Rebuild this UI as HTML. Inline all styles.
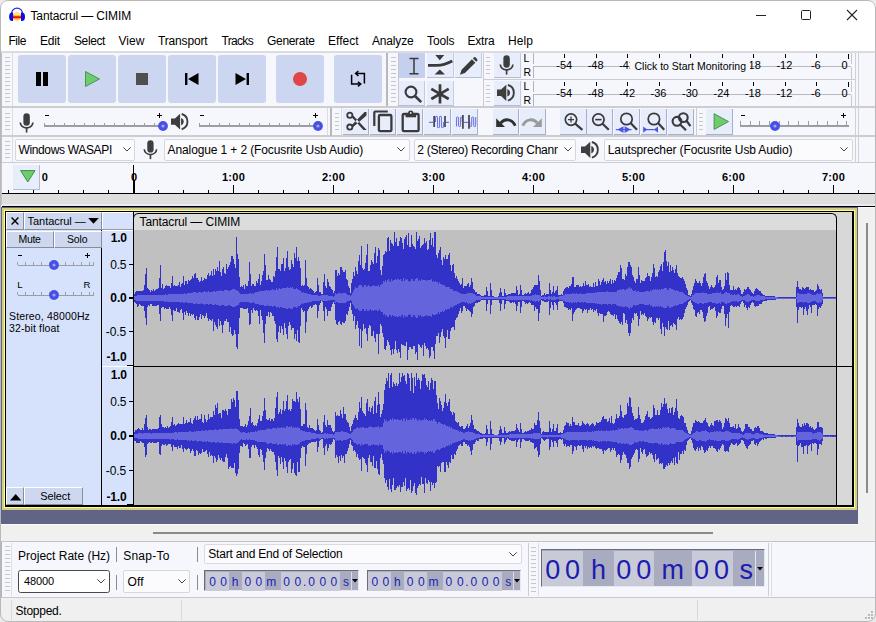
<!DOCTYPE html>
<html><head><meta charset="utf-8"><title>Tantacrul — CIMIM</title>
<style>
*{box-sizing:border-box;margin:0;padding:0}
html,body{width:876px;height:622px;overflow:hidden;background:#f0f0f0}
body{font-family:"Liberation Sans","DejaVu Sans",sans-serif;font-size:12px;color:#000;position:relative}
.a{position:absolute}
.t{position:absolute;white-space:nowrap;line-height:1}
svg{position:absolute;overflow:visible}
</style></head><body>
<div class="a" style="left:0px;top:0px;width:876px;height:52px;background:#fff;"></div>
<svg style="left:0px;top:0px" width="876" height="622" viewBox="0 0 876 622"><ellipse cx="17" cy="16.400" rx="4.200" ry="4.200" fill="#ffc93a"/>
<ellipse cx="17" cy="14.300" rx="3" ry="1.700" fill="#ffe98a"/>
<path d="M12.950 15.400H21.050L21.200 16.300H12.800Z" fill="#ff9410"/>
<path d="M12.800 16.300H21.200V18.300H13.250Z M21.200 18.300H20.750" fill="#f20d0d"/>
<path d="M13.250 18.300H20.750L20.300 19H13.700Z" fill="#ff9a14"/>
<path d="M11.600 14.800V13.550A5.450 5.500 0 0 1 22.500 13.550V14.800" fill="none" stroke="#2424f0" stroke-width="1.300"/>
<path d="M13.100 12.400V20.900H12.200A3.100 4.250 0 0 1 12.200 12.400Z" fill="#0c0ce4"/>
<path d="M21 12.400V20.900H21.900A3.100 4.250 0 0 0 21.900 12.400Z" fill="#0c0ce4"/></svg>
<div class="t" style="left:30.50px;top:10.00px;font-size:12.00px;letter-spacing:-0.128px;">Tantacrul — CIMIM</div>
<div class="a" style="left:756px;top:15px;width:10px;height:1px;background:#222;"></div>
<div class="a" style="left:801px;top:10px;width:10px;height:10px;border:1px solid #222;border-radius:1.5px"></div>
<svg style="left:847px;top:10px" width="10" height="10" viewBox="0 0 10 10"><path d="M0 0L10 10M10 0L0 10" stroke="#222" stroke-width="1.1" fill="none"/></svg>
<div class="t" style="left:8.50px;top:35.00px;font-size:12.00px;letter-spacing:-0.459px;">File</div>
<div class="t" style="left:40.00px;top:35.00px;font-size:12.00px;letter-spacing:-0.169px;">Edit</div>
<div class="t" style="left:74.00px;top:35.00px;font-size:12.00px;letter-spacing:-0.392px;">Select</div>
<div class="t" style="left:118.50px;top:35.00px;font-size:12.00px;letter-spacing:0.052px;">View</div>
<div class="t" style="left:158.00px;top:35.00px;font-size:12.00px;letter-spacing:-0.156px;">Transport</div>
<div class="t" style="left:221.50px;top:35.00px;font-size:12.00px;letter-spacing:-0.676px;">Tracks</div>
<div class="t" style="left:267.00px;top:35.00px;font-size:12.00px;letter-spacing:-0.316px;">Generate</div>
<div class="t" style="left:328.00px;top:35.00px;font-size:12.00px;letter-spacing:0.006px;">Effect</div>
<div class="t" style="left:372.00px;top:35.00px;font-size:12.00px;letter-spacing:-0.170px;">Analyze</div>
<div class="t" style="left:427.00px;top:35.00px;font-size:12.00px;letter-spacing:-0.102px;">Tools</div>
<div class="t" style="left:467.50px;top:35.00px;font-size:12.00px;letter-spacing:-0.201px;">Extra</div>
<div class="t" style="left:508.00px;top:35.00px;font-size:12.00px;letter-spacing:0.080px;">Help</div>
<div class="a" style="left:0px;top:51px;width:876px;height:1px;background:#e6e6e6;"></div>
<div class="a" style="left:0px;top:52px;width:876px;height:112px;background:#f6f7fd;"></div>
<div class="a" style="left:0px;top:106px;width:876px;height:1.6px;background:#cdcdd0;"></div>
<div class="a" style="left:0px;top:135px;width:876px;height:1.5px;background:#cdcdd0;"></div>
<div class="a" style="left:0px;top:161.6px;width:876px;height:1.6px;background:#cdcdd0;"></div>
<div class="a" style="left:1px;top:52px;width:1px;height:112px;background:#bcbcc0;"></div>
<div class="a" style="left:4.5px;top:57px;width:5px;height:46px;background:repeating-linear-gradient(to bottom,#c6c6cc 0 1px,rgba(0,0,0,0) 1px 4px)"></div>
<div class="a" style="left:11.5px;top:53px;width:1px;height:53px;background:#dcdce4;"></div>
<div class="a" style="left:18px;top:55px;width:48px;height:48px;background:#cdd6f0;border-radius:3px"></div>
<div class="a" style="left:68px;top:55px;width:48px;height:48px;background:#cdd6f0;border-radius:3px"></div>
<div class="a" style="left:118px;top:55px;width:48px;height:48px;background:#cdd6f0;border-radius:3px"></div>
<div class="a" style="left:168px;top:55px;width:48px;height:48px;background:#cdd6f0;border-radius:3px"></div>
<div class="a" style="left:218px;top:55px;width:48px;height:48px;background:#cdd6f0;border-radius:3px"></div>
<div class="a" style="left:276px;top:55px;width:48px;height:48px;background:#cdd6f0;border-radius:3px"></div>
<div class="a" style="left:334px;top:55px;width:48px;height:48px;background:#cdd6f0;border-radius:3px"></div>
<div class="a" style="left:35.7px;top:72.4px;width:5px;height:13.6px;background:#000;"></div>
<div class="a" style="left:42.8px;top:72.4px;width:5px;height:13.6px;background:#000;"></div>
<svg style="left:84px;top:70px" width="18" height="18" viewBox="0 0 18 18"><path d="M1.5 1.5L15.5 9L1.5 16.5Z" fill="#6ecb70" stroke="#3f8f43" stroke-width="0.9" stroke-linejoin="round"/></svg>
<div class="a" style="left:136px;top:73px;width:12px;height:12px;background:#4f4f4f;"></div>
<svg style="left:184px;top:72px" width="16" height="14" viewBox="0 0 16 14"><path d="M1 1h2.4v12H1zM14.5 1v12L4 7z" fill="#000"/></svg>
<svg style="left:234px;top:72px" width="16" height="14" viewBox="0 0 16 14"><path d="M12.6 1h2.4v12h-2.4zM1.5 1v12L12 7z" fill="#000"/></svg>
<div class="a" style="left:293px;top:72px;width:14px;height:14px;border-radius:50%;background:#e04646"></div>
<svg style="left:349px;top:70px" width="18" height="18" viewBox="0 0 18 18"><path d="M7.6 3.5H15.4V13.4M2.6 4.8V14.1H10.4" fill="none" stroke="#000" stroke-width="1.5"/><path d="M9.4 1.2L6.6 3.5L9.4 5.8M8.9 11.8L11.7 14.1L8.9 16.4" fill="none" stroke="#000" stroke-width="1.5"/></svg>
<div class="a" style="left:386.3px;top:52.5px;width:1.4px;height:53.5px;background:#b8b8bc;"></div>
<div class="a" style="left:391px;top:57px;width:5px;height:46px;background:repeating-linear-gradient(to bottom,#c6c6cc 0 1px,rgba(0,0,0,0) 1px 4px)"></div>
<div class="a" style="left:397.5px;top:53px;width:1px;height:53px;background:#c4c6d0;"></div>
<div class="a" style="left:399px;top:53px;width:26px;height:25px;background:#c5cfee;"></div>
<div class="a" style="left:427px;top:53px;width:26.5px;height:25px;background:#e8edfb;border-bottom:1px solid #b4bcd8;border-right:1px solid #c4cae0"></div>
<div class="a" style="left:455px;top:53px;width:26.5px;height:25px;background:#e8edfb;border-bottom:1px solid #b4bcd8;border-right:1px solid #c4cae0"></div>
<div class="a" style="left:399px;top:81px;width:26px;height:25px;background:#e8edfb;border-bottom:1px solid #b4bcd8;border-right:1px solid #c4cae0"></div>
<div class="a" style="left:427px;top:81px;width:26.5px;height:25px;background:#e8edfb;border-bottom:1px solid #b4bcd8;border-right:1px solid #c4cae0"></div>
<svg style="left:404.7px;top:56.5px" width="18" height="19" viewBox="0 0 18 19"><path d="M4.500 1.500H13.500M4.500 16.800H13.500M9 1.500V16.800" fill="none" stroke="#3a3a3a" stroke-width="1.500"/></svg>
<svg style="left:427px;top:53px" width="27" height="25" viewBox="0 0 27 25"><path d="M8.300 2.100H17.300L12.800 7.200Z M7.600 21.600H18L12.800 16.600Z" fill="#3a3a3a"/><path d="M1 12.300H10C14 12.300 18 11.600 25.300 7.900" fill="none" stroke="#3a3a3a" stroke-width="2.800"/></svg>
<svg style="left:458.5px;top:56.7px" width="22" height="20" viewBox="0 0 22 20"><g transform="scale(0.93)"><path d="M1 19L2.800 13.600L13.900 2.500L17.500 6.100L6.400 17.200Z M15 1.500L16.100 0.400Q16.900 -0.300 17.700 0.400L19.600 2.300Q20.300 3.100 19.600 3.900L18.500 5Z" fill="#3a3a3a"/></g></svg>
<svg style="left:403px;top:83.8px" width="20" height="20" viewBox="0 0 20 20"><circle cx="8" cy="8" r="5.400" fill="none" stroke="#3a3a3a" stroke-width="2.100"/><path d="M12 12L18.200 18.200" stroke="#3a3a3a" stroke-width="2.600"/></svg>
<svg style="left:429.4px;top:82.6px" width="22" height="22" viewBox="0 0 22 22"><path d="M11 1.200V20.600M2.300 5.800L19.700 16M19.700 5.800L2.300 16" stroke="#3a3a3a" stroke-width="2.700" fill="none"/></svg>
<div class="a" style="left:483px;top:53px;width:1px;height:53px;background:#cdcdd0;"></div>
<div class="a" style="left:0px;top:51px;width:876px;height:1.5px;background:#dcdce0;"></div>
<div class="a" style="left:486px;top:56.7px;width:4px;height:19px;background:repeating-linear-gradient(to bottom,#c6c6cc 0 1px,rgba(0,0,0,0) 1px 4px)"></div>
<div class="a" style="left:493.5px;top:52.5px;width:27px;height:25px;background:#e8edfb;border-bottom:1px solid #b4bcd8;border-right:1px solid #c4cae0"></div>
<div class="t" style="left:523.60px;top:52.75px;font-size:10.50px;">L</div>
<div class="t" style="left:523.60px;top:66.75px;font-size:10.50px;letter-spacing:-0.983px;">R</div>
<div class="a" style="left:532.5px;top:52.5px;width:1px;height:11.5px;background:#b4b4bc;"></div>
<div class="a" style="left:532.5px;top:66.3px;width:318px;height:1px;background:#b9b9c0;"></div>
<div class="a" style="left:532.5px;top:66.3px;width:1px;height:12px;background:#b4b4bc;"></div>
<div class="a" style="left:850.5px;top:52.5px;width:1px;height:11.5px;background:#c8c8d0;"></div>
<div class="a" style="left:850.5px;top:66.5px;width:1px;height:12px;background:#c8c8d0;"></div>
<div class="a" style="left:563.5px;top:54.3px;width:1px;height:3.6px;background:#000;"></div>
<div class="t" style="left:556.25px;top:59.50px;font-size:11.00px;">-54</div>
<div class="a" style="left:595.5px;top:54.3px;width:1px;height:3.6px;background:#000;"></div>
<div class="t" style="left:587.70px;top:59.50px;font-size:11.00px;">-48</div>
<div class="a" style="left:626.5px;top:54.3px;width:1px;height:3.6px;background:#000;"></div>
<div class="t" style="left:619.15px;top:59.50px;font-size:11.00px;">-42</div>
<div class="a" style="left:658.5px;top:54.3px;width:1px;height:3.6px;background:#000;"></div>
<div class="t" style="left:650.60px;top:59.50px;font-size:11.00px;">-36</div>
<div class="a" style="left:689.5px;top:54.3px;width:1px;height:3.6px;background:#000;"></div>
<div class="t" style="left:682.05px;top:59.50px;font-size:11.00px;">-30</div>
<div class="a" style="left:721.5px;top:54.3px;width:1px;height:3.6px;background:#000;"></div>
<div class="t" style="left:713.50px;top:59.50px;font-size:11.00px;">-24</div>
<div class="a" style="left:752.5px;top:54.3px;width:1px;height:3.6px;background:#000;"></div>
<div class="t" style="left:744.95px;top:59.50px;font-size:11.00px;">-18</div>
<div class="a" style="left:784.5px;top:54.3px;width:1px;height:3.6px;background:#000;"></div>
<div class="t" style="left:776.40px;top:59.50px;font-size:11.00px;">-12</div>
<div class="a" style="left:815.5px;top:54.3px;width:1px;height:3.6px;background:#000;"></div>
<div class="t" style="left:810.91px;top:59.50px;font-size:11.00px;">-6</div>
<div class="a" style="left:847.5px;top:54.3px;width:1px;height:5px;background:#000;"></div>
<div class="t" style="left:841.43px;top:59.50px;font-size:11.00px;">0</div>
<div class="a" style="left:486px;top:85.4px;width:4px;height:19px;background:repeating-linear-gradient(to bottom,#c6c6cc 0 1px,rgba(0,0,0,0) 1px 4px)"></div>
<div class="a" style="left:493.5px;top:80.5px;width:27px;height:25px;background:#e8edfb;border-bottom:1px solid #b4bcd8;border-right:1px solid #c4cae0"></div>
<div class="t" style="left:523.60px;top:80.75px;font-size:10.50px;">L</div>
<div class="t" style="left:523.60px;top:94.75px;font-size:10.50px;letter-spacing:-0.983px;">R</div>
<div class="a" style="left:532.5px;top:80.5px;width:1px;height:11.5px;background:#b4b4bc;"></div>
<div class="a" style="left:532.5px;top:94.3px;width:318px;height:1px;background:#b9b9c0;"></div>
<div class="a" style="left:532.5px;top:94.3px;width:1px;height:12px;background:#b4b4bc;"></div>
<div class="a" style="left:850.5px;top:80.5px;width:1px;height:11.5px;background:#c8c8d0;"></div>
<div class="a" style="left:850.5px;top:94.5px;width:1px;height:12px;background:#c8c8d0;"></div>
<div class="a" style="left:563.5px;top:82.3px;width:1px;height:3.6px;background:#000;"></div>
<div class="t" style="left:556.25px;top:87.50px;font-size:11.00px;">-54</div>
<div class="a" style="left:595.5px;top:82.3px;width:1px;height:3.6px;background:#000;"></div>
<div class="t" style="left:587.70px;top:87.50px;font-size:11.00px;">-48</div>
<div class="a" style="left:626.5px;top:82.3px;width:1px;height:3.6px;background:#000;"></div>
<div class="t" style="left:619.15px;top:87.50px;font-size:11.00px;">-42</div>
<div class="a" style="left:658.5px;top:82.3px;width:1px;height:3.6px;background:#000;"></div>
<div class="t" style="left:650.60px;top:87.50px;font-size:11.00px;">-36</div>
<div class="a" style="left:689.5px;top:82.3px;width:1px;height:3.6px;background:#000;"></div>
<div class="t" style="left:682.05px;top:87.50px;font-size:11.00px;">-30</div>
<div class="a" style="left:721.5px;top:82.3px;width:1px;height:3.6px;background:#000;"></div>
<div class="t" style="left:713.50px;top:87.50px;font-size:11.00px;">-24</div>
<div class="a" style="left:752.5px;top:82.3px;width:1px;height:3.6px;background:#000;"></div>
<div class="t" style="left:744.95px;top:87.50px;font-size:11.00px;">-18</div>
<div class="a" style="left:784.5px;top:82.3px;width:1px;height:3.6px;background:#000;"></div>
<div class="t" style="left:776.40px;top:87.50px;font-size:11.00px;">-12</div>
<div class="a" style="left:815.5px;top:82.3px;width:1px;height:3.6px;background:#000;"></div>
<div class="t" style="left:810.91px;top:87.50px;font-size:11.00px;">-6</div>
<div class="a" style="left:847.5px;top:82.3px;width:1px;height:5px;background:#000;"></div>
<div class="t" style="left:841.43px;top:87.50px;font-size:11.00px;">0</div>
<div class="a" style="left:484px;top:78.7px;width:371px;height:1.5px;background:#cbcbd0;"></div>
<svg style="left:499.4px;top:55px" width="15.2" height="19.95" viewBox="0 0 16 21"><rect x="4.600" y="0.300" width="6.800" height="13.200" rx="3.400" fill="#3e3e3e"/><path d="M1.400 9.900A6.600 5.800 0 0 0 14.600 9.900" fill="none" stroke="#3e3e3e" stroke-width="1.750"/><path d="M8 15.500V20.600" stroke="#3e3e3e" stroke-width="1.800"/></svg>
<svg style="left:496.8px;top:83.7px" width="18" height="17.6" viewBox="0 0 18 17.6"><path d="M0 5.600H4L9.300 0.700V16.900L4 12H0Z" fill="#3e3e3e"/><path d="M10.300 5A4 4 0 0 1 10.300 12.600Z" fill="#3e3e3e"/><path d="M10.900 1A8.100 8.100 0 0 1 10.900 16.600" fill="none" stroke="#3e3e3e" stroke-width="1.900"/></svg>
<div class="a" style="left:630px;top:58.5px;width:120px;height:15px;background:#f6f7fd;"></div>
<div class="t" style="left:634.50px;top:60.75px;font-size:10.50px;letter-spacing:0.002px;">Click to Start Monitoring</div>
<div class="a" style="left:855px;top:53px;width:1px;height:54px;background:#cfcfd6;"></div>
<div class="a" style="left:858px;top:53px;width:1px;height:54px;background:#cfcfd6;"></div>
<div class="a" style="left:4.5px;top:113px;width:5px;height:20px;background:repeating-linear-gradient(to bottom,#c6c6cc 0 1px,rgba(0,0,0,0) 1px 4px)"></div>
<div class="a" style="left:11.5px;top:108px;width:1px;height:27px;background:#dcdce4;"></div>
<svg style="left:18.5px;top:112.5px" width="15.2" height="19.95" viewBox="0 0 16 21"><rect x="4.600" y="0.300" width="6.800" height="13.200" rx="3.400" fill="#3e3e3e"/><path d="M1.400 9.900A6.600 5.800 0 0 0 14.600 9.900" fill="none" stroke="#3e3e3e" stroke-width="1.750"/><path d="M8 15.500V20.600" stroke="#3e3e3e" stroke-width="1.800"/></svg>
<div class="a" style="left:44px;top:125.2px;width:117px;height:1.4px;background:#9c9ca4;"></div>
<div class="a" style="left:44px;top:123px;width:1px;height:2.4px;background:#9c9ca4;"></div>
<div class="a" style="left:54px;top:123px;width:1px;height:2.4px;background:#9c9ca4;"></div>
<div class="a" style="left:64px;top:123px;width:1px;height:2.4px;background:#9c9ca4;"></div>
<div class="a" style="left:74px;top:123px;width:1px;height:2.4px;background:#9c9ca4;"></div>
<div class="a" style="left:84px;top:123px;width:1px;height:2.4px;background:#9c9ca4;"></div>
<div class="a" style="left:94px;top:123px;width:1px;height:2.4px;background:#9c9ca4;"></div>
<div class="a" style="left:104px;top:123px;width:1px;height:2.4px;background:#9c9ca4;"></div>
<div class="a" style="left:114px;top:123px;width:1px;height:2.4px;background:#9c9ca4;"></div>
<div class="a" style="left:124px;top:123px;width:1px;height:2.4px;background:#9c9ca4;"></div>
<div class="a" style="left:134px;top:123px;width:1px;height:2.4px;background:#9c9ca4;"></div>
<div class="a" style="left:144px;top:123px;width:1px;height:2.4px;background:#9c9ca4;"></div>
<div class="a" style="left:154px;top:123px;width:1px;height:2.4px;background:#9c9ca4;"></div>
<div class="a" style="left:44.5px;top:115px;width:4.5px;height:1px;background:#000;"></div>
<div class="a" style="left:156.8px;top:115px;width:5px;height:1px;background:#000;"></div>
<div class="a" style="left:158.8px;top:113px;width:1px;height:5px;background:#000;"></div>
<svg style="left:158.1px;top:120.5px" width="10" height="10" viewBox="0 0 10 10"><circle cx="5" cy="5" r="4.900" fill="#484fe8"/><circle cx="5" cy="5" r="1.600" fill="#a2a4dc"/></svg>
<svg style="left:171px;top:112.8px" width="17.64" height="17.248" viewBox="0 0 18 17.6"><path d="M0 5.600H4L9.300 0.700V16.900L4 12H0Z" fill="#3e3e3e"/><path d="M10.300 5A4 4 0 0 1 10.300 12.600Z" fill="#3e3e3e"/><path d="M10.900 1A8.100 8.100 0 0 1 10.900 16.600" fill="none" stroke="#3e3e3e" stroke-width="1.900"/></svg>
<div class="a" style="left:199px;top:125.2px;width:118px;height:1.4px;background:#9c9ca4;"></div>
<div class="a" style="left:199px;top:123px;width:1px;height:2.4px;background:#9c9ca4;"></div>
<div class="a" style="left:209px;top:123px;width:1px;height:2.4px;background:#9c9ca4;"></div>
<div class="a" style="left:219px;top:123px;width:1px;height:2.4px;background:#9c9ca4;"></div>
<div class="a" style="left:229px;top:123px;width:1px;height:2.4px;background:#9c9ca4;"></div>
<div class="a" style="left:239px;top:123px;width:1px;height:2.4px;background:#9c9ca4;"></div>
<div class="a" style="left:249px;top:123px;width:1px;height:2.4px;background:#9c9ca4;"></div>
<div class="a" style="left:259px;top:123px;width:1px;height:2.4px;background:#9c9ca4;"></div>
<div class="a" style="left:269px;top:123px;width:1px;height:2.4px;background:#9c9ca4;"></div>
<div class="a" style="left:279px;top:123px;width:1px;height:2.4px;background:#9c9ca4;"></div>
<div class="a" style="left:289px;top:123px;width:1px;height:2.4px;background:#9c9ca4;"></div>
<div class="a" style="left:299px;top:123px;width:1px;height:2.4px;background:#9c9ca4;"></div>
<div class="a" style="left:309px;top:123px;width:1px;height:2.4px;background:#9c9ca4;"></div>
<div class="a" style="left:199.5px;top:115px;width:4.5px;height:1px;background:#000;"></div>
<div class="a" style="left:312.8px;top:115px;width:5px;height:1px;background:#000;"></div>
<div class="a" style="left:314.8px;top:113px;width:1px;height:5px;background:#000;"></div>
<svg style="left:313px;top:120.5px" width="10" height="10" viewBox="0 0 10 10"><circle cx="5" cy="5" r="4.900" fill="#484fe8"/><circle cx="5" cy="5" r="1.600" fill="#a2a4dc"/></svg>
<div class="a" style="left:327.3px;top:108px;width:1px;height:27px;background:#dcdce0;"></div>
<div class="a" style="left:330.3px;top:107.5px;width:1.4px;height:28px;background:#b8b8bc;"></div>
<div class="a" style="left:335px;top:113px;width:4px;height:20px;background:repeating-linear-gradient(to bottom,#c6c6cc 0 1px,rgba(0,0,0,0) 1px 4px)"></div>
<div class="a" style="left:341.2px;top:108px;width:1px;height:27px;background:#dcdce4;"></div>
<div class="a" style="left:342.8px;top:109px;width:26.2px;height:25.6px;background:#e8edfb;border-bottom:1px solid #a8b0cc;border-right:1px solid #a8aec8"></div>
<div class="a" style="left:370px;top:109px;width:26.2px;height:25.6px;background:#e8edfb;border-bottom:1px solid #a8b0cc;border-right:1px solid #a8aec8"></div>
<div class="a" style="left:397.2px;top:109px;width:26.2px;height:25.6px;background:#e8edfb;border-bottom:1px solid #a8b0cc;border-right:1px solid #a8aec8"></div>
<div class="a" style="left:424.4px;top:109px;width:26.2px;height:25.6px;background:#e8edfb;border-bottom:1px solid #a8b0cc;border-right:1px solid #a8aec8"></div>
<div class="a" style="left:451.6px;top:109px;width:26.2px;height:25.6px;background:#e8edfb;border-bottom:1px solid #a8b0cc;border-right:1px solid #a8aec8"></div>
<div class="a" style="left:492.8px;top:109px;width:26.2px;height:25.6px;background:#e8edfb;border-bottom:1px solid #a8b0cc;border-right:1px solid #a8aec8"></div>
<div class="a" style="left:519.8px;top:109px;width:26.2px;height:25.6px;background:#e8edfb;border-bottom:1px solid #a8b0cc;border-right:1px solid #a8aec8"></div>
<div class="a" style="left:560.4px;top:109px;width:26.2px;height:25.6px;background:#e8edfb;border-bottom:1px solid #a8b0cc;border-right:1px solid #a8aec8"></div>
<div class="a" style="left:587.25px;top:109px;width:26.2px;height:25.6px;background:#e8edfb;border-bottom:1px solid #a8b0cc;border-right:1px solid #a8aec8"></div>
<div class="a" style="left:614.1px;top:109px;width:26.2px;height:25.6px;background:#e8edfb;border-bottom:1px solid #a8b0cc;border-right:1px solid #a8aec8"></div>
<div class="a" style="left:640.95px;top:109px;width:26.2px;height:25.6px;background:#e8edfb;border-bottom:1px solid #a8b0cc;border-right:1px solid #a8aec8"></div>
<div class="a" style="left:667.8px;top:109px;width:26.2px;height:25.6px;background:#e8edfb;border-bottom:1px solid #a8b0cc;border-right:1px solid #a8aec8"></div>
<div class="a" style="left:4.5px;top:141px;width:5px;height:19px;background:repeating-linear-gradient(to bottom,#c6c6cc 0 1px,rgba(0,0,0,0) 1px 4px)"></div>
<div class="a" style="left:11.5px;top:137px;width:1px;height:25px;background:#dcdce4;"></div>
<div class="a" style="left:14.6px;top:138.5px;width:120.6px;height:22px;background:#fbfbfe;border:1px solid #d6d6de;border-radius:2px"></div>
<div class="t" style="left:18.40px;top:144.00px;font-size:12.00px;letter-spacing:-0.339px;">Windows WASAPI</div>
<svg style="left:122.6px;top:147.3px" width="8" height="5" viewBox="0 0 8 5"><path d="M0.4 0.4L4 4L7.6 0.4" fill="none" stroke="#444" stroke-width="1"/></svg>
<svg style="left:143px;top:140.2px" width="14.88" height="19.53" viewBox="0 0 16 21"><rect x="4.600" y="0.300" width="6.800" height="13.200" rx="3.400" fill="#3e3e3e"/><path d="M1.400 9.900A6.600 5.800 0 0 0 14.600 9.900" fill="none" stroke="#3e3e3e" stroke-width="1.750"/><path d="M8 15.500V20.600" stroke="#3e3e3e" stroke-width="1.800"/></svg>
<div class="a" style="left:163.8px;top:138.5px;width:246.2px;height:22px;background:#fbfbfe;border:1px solid #d6d6de;border-radius:2px"></div>
<div class="t" style="left:167.60px;top:144.00px;font-size:12.00px;letter-spacing:-0.119px;">Analogue 1 + 2 (Focusrite Usb Audio)</div>
<svg style="left:397.4px;top:147.3px" width="8" height="5" viewBox="0 0 8 5"><path d="M0.4 0.4L4 4L7.6 0.4" fill="none" stroke="#444" stroke-width="1"/></svg>
<div class="a" style="left:413.8px;top:138.5px;width:162.6px;height:22px;background:#fbfbfe;border:1px solid #d6d6de;border-radius:2px"></div>
<div class="a" style="left:417.3px;top:140px;width:140.6px;height:19px;overflow:hidden">
<div class="t" style="left:0;top:4.04px;font-size:12px;letter-spacing:-0.273px;">2 (Stereo) Recording Channels</div></div>
<svg style="left:563.8px;top:147.3px" width="8" height="5" viewBox="0 0 8 5"><path d="M0.4 0.4L4 4L7.6 0.4" fill="none" stroke="#444" stroke-width="1"/></svg>
<svg style="left:580.8px;top:140.6px" width="18" height="17.6" viewBox="0 0 18 17.6"><path d="M0 5.600H4L9.300 0.700V16.900L4 12H0Z" fill="#3e3e3e"/><path d="M10.300 5A4 4 0 0 1 10.300 12.600Z" fill="#3e3e3e"/><path d="M10.900 1A8.100 8.100 0 0 1 10.900 16.600" fill="none" stroke="#3e3e3e" stroke-width="1.900"/></svg>
<div class="a" style="left:604px;top:138.5px;width:249px;height:22px;background:#fbfbfe;border:1px solid #d6d6de;border-radius:2px"></div>
<div class="t" style="left:607.80px;top:144.00px;font-size:12.00px;letter-spacing:-0.125px;">Lautsprecher (Focusrite Usb Audio)</div>
<svg style="left:840.4px;top:147.3px" width="8" height="5" viewBox="0 0 8 5"><path d="M0.4 0.4L4 4L7.6 0.4" fill="none" stroke="#444" stroke-width="1"/></svg>
<svg style="left:0px;top:0px" width="876" height="622" viewBox="0 0 876 622"><circle cx="349.800" cy="115.300" r="2.600" fill="none" stroke="#3a3a3a" stroke-width="1.800"/><circle cx="349.800" cy="127.100" r="2.600" fill="none" stroke="#3a3a3a" stroke-width="1.800"/><path d="M351.500 125.300L353.200 126.900L366.500 115.400V111.900H364.600Z M351.500 117.100L353.200 115.500L366.700 129.900H363.400Z" fill="#3a3a3a"/></svg>
<svg style="left:0px;top:0px" width="876" height="622" viewBox="0 0 876 622"><path d="M374.300 126.100V112.600Q374.300 111.500 375.400 111.500H387.800" fill="none" stroke="#3a3a3a" stroke-width="2.200"/><rect x="378.900" y="115" width="12.500" height="16.200" rx="1.300" fill="none" stroke="#3a3a3a" stroke-width="2.300"/></svg>
<svg style="left:0px;top:0px" width="876" height="622" viewBox="0 0 876 622"><rect x="402.700" y="114" width="15.900" height="17.200" rx="1.300" fill="none" stroke="#3a3a3a" stroke-width="2.300"/><path d="M405.600 117.300V113.500H416V117.300Z" fill="#3a3a3a"/><path d="M408 113.600A2.700 3.200 0 0 1 413.400 113.600Z" fill="#3a3a3a"/><circle cx="410.700" cy="112.900" r="0.900" fill="#e8edfb"/></svg>
<svg style="left:0px;top:0px" width="876" height="622" viewBox="0 0 876 622"><path d="M429 122.400H433.500M446 122.400H448.900" stroke="#6e76ea" stroke-width="1.200" fill="none"/><path d="M435.50 122.10V118.00C435.50 116.40 435.50 116.40 436.50 116.40C437.50 116.40 437.50 116.40 437.50 118.00V126.20C437.50 127.80 437.50 127.80 438.50 127.80C439.50 127.80 439.50 127.80 439.50 126.20V118.00C439.50 116.40 439.50 116.40 440.50 116.40C441.50 116.40 441.50 116.40 441.50 118.00V126.20C441.50 127.80 441.50 127.80 442.50 127.80C443.50 127.80 443.50 127.80 443.50 126.20V122.10" stroke="#6e76ea" stroke-width="1.100" fill="none"/><path d="M434.150 115.900V126.900M445 115.900V126.900" stroke="#4a4a4a" stroke-width="1.800" fill="none"/></svg>
<svg style="left:0px;top:0px" width="876" height="622" viewBox="0 0 876 622"><path d="M463.800 122.400H468" stroke="#6e76ea" stroke-width="1.200" fill="none"/><path d="M456.50 126.50V118.60C456.50 117.00 456.50 117.00 457.50 117.00C458.50 117.00 458.50 117.00 458.50 118.60V124.90C458.50 126.50 458.50 126.50 459.50 126.50C460.50 126.50 460.50 126.50 460.50 124.90V118.36C460.50 117.00 460.50 117.00 461.35 117.00C462.20 117.00 462.20 117.00 462.20 118.36V121.80" stroke="#6e76ea" stroke-width="1.100" fill="none"/><path d="M469.80 121.80V124.98C469.80 126.50 469.80 126.50 470.75 126.50C471.70 126.50 471.70 126.50 471.70 124.98V118.60C471.70 117.00 471.70 117.00 472.70 117.00C473.70 117.00 473.70 117.00 473.70 118.60V124.90C473.70 126.50 473.70 126.50 474.70 126.50C475.70 126.50 475.70 126.50 475.70 124.90V117.00" stroke="#6e76ea" stroke-width="1.100" fill="none"/><path d="M462.900 114.900V128.700M469 114.900V128.700" stroke="#4a4a4a" stroke-width="1.800" fill="none"/></svg>
<svg style="left:494.6px;top:115px" width="22" height="14" viewBox="0 0 22 14"><g><path d="M1.2 3.200V12H10Z" fill="#303030"/><path d="M5.600 8.200C9.5 3.200 17 3.400 20.200 10.800" fill="none" stroke="#303030" stroke-width="2.8"/></g></svg>
<svg style="left:520.6px;top:115px" width="22" height="14" viewBox="0 0 22 14"><g transform="translate(22,0) scale(-1,1)"><path d="M1.2 3.200V12H10Z" fill="#9a9a9a"/><path d="M5.600 8.200C9.5 3.200 17 3.400 20.200 10.800" fill="none" stroke="#9a9a9a" stroke-width="2.8"/></g></svg>
<svg style="left:0px;top:0px" width="876" height="622" viewBox="0 0 876 622"><circle cx="571" cy="119.6" r="5.7" fill="none" stroke="#3a3a3a" stroke-width="1.7"/><path d="M575.104 123.704L582.4 129.8" stroke="#3a3a3a" stroke-width="2.200"/><path d="M568 119.600H574M571 116.600V122.600" stroke="#3a3a3a" stroke-width="1.3"/></svg>
<svg style="left:0px;top:0px" width="876" height="622" viewBox="0 0 876 622"><circle cx="598.4" cy="119.6" r="5.7" fill="none" stroke="#3a3a3a" stroke-width="1.7"/><path d="M602.504 123.704L608.8 129.8" stroke="#3a3a3a" stroke-width="2.200"/><path d="M595.2 119.600H601.600" stroke="#3a3a3a" stroke-width="1.6"/></svg>
<svg style="left:0px;top:0px" width="876" height="622" viewBox="0 0 876 622"><circle cx="626.5" cy="119" r="5.7" fill="none" stroke="#3a3a3a" stroke-width="1.7"/><path d="M630.604 123.104L637 129.8" stroke="#3a3a3a" stroke-width="2.200"/><path d="M615.800 129.600H631.600" stroke="#4d55e4" stroke-width="1.100"/><path d="M617.300 129.600L623.500 126.200V133ZM630.800 129.600L624.600 126.200V133Z" fill="#4d55e4"/></svg>
<svg style="left:0px;top:0px" width="876" height="622" viewBox="0 0 876 622"><circle cx="653.9" cy="119" r="5.7" fill="none" stroke="#3a3a3a" stroke-width="1.7"/><path d="M658.004 123.104L664.2 129.8" stroke="#3a3a3a" stroke-width="2.200"/><path d="M643.500 129.600H657.500" stroke="#4d55e4" stroke-width="1.2"/><path d="M643.200 126.400L647.200 129.600L643.200 132.800ZM658 126.400L654 129.600L658 132.800Z" fill="#4d55e4"/></svg>
<svg style="left:0px;top:0px" width="876" height="622" viewBox="0 0 876 622"><circle cx="677" cy="121.3" r="4.4" fill="none" stroke="#3a3a3a" stroke-width="2.1"/><path d="M680.168 124.468L686 130.2" stroke="#3a3a3a" stroke-width="2.200"/></svg>
<svg style="left:0px;top:0px" width="876" height="622" viewBox="0 0 876 622"><circle cx="683.3" cy="117.6" r="4.4" fill="none" stroke="#3a3a3a" stroke-width="2.1"/><path d="M686.468 120.768L690.4 126.2" stroke="#3a3a3a" stroke-width="2.200"/></svg>
<div class="a" style="left:695.5px;top:108px;width:1px;height:27px;background:#cdcdd0;"></div>
<div class="a" style="left:699px;top:113px;width:4px;height:20px;background:repeating-linear-gradient(to bottom,#c6c6cc 0 1px,rgba(0,0,0,0) 1px 4px)"></div>
<div class="a" style="left:706.400px;top:109px;width:27px;height:25.6px;background:#e8edfb;border-bottom:1px solid #a8b0cc;border-right:1px solid #a8aec8"></div>
<svg style="left:712.5px;top:112.5px" width="18" height="18" viewBox="0 0 18 18"><path d="M1.100 0.700L15.500 8.600L1.100 16.500Z" fill="#6ecb70" stroke="#3f8f43" stroke-width="0.9" stroke-linejoin="round"/></svg>
<div class="a" style="left:740px;top:125.2px;width:109px;height:1.4px;background:#9c9ca4;"></div>
<div class="a" style="left:740px;top:121.4px;width:1px;height:4px;background:#9c9ca4;"></div>
<div class="a" style="left:750px;top:121.4px;width:1px;height:4px;background:#9c9ca4;"></div>
<div class="a" style="left:759px;top:121.4px;width:1px;height:4px;background:#9c9ca4;"></div>
<div class="a" style="left:769px;top:121.4px;width:1px;height:4px;background:#9c9ca4;"></div>
<div class="a" style="left:779px;top:121.4px;width:1px;height:4px;background:#9c9ca4;"></div>
<div class="a" style="left:788px;top:121.4px;width:1px;height:4px;background:#9c9ca4;"></div>
<div class="a" style="left:798px;top:121.4px;width:1px;height:4px;background:#9c9ca4;"></div>
<div class="a" style="left:808px;top:121.4px;width:1px;height:4px;background:#9c9ca4;"></div>
<div class="a" style="left:817px;top:121.4px;width:1px;height:4px;background:#9c9ca4;"></div>
<div class="a" style="left:827px;top:121.4px;width:1px;height:4px;background:#9c9ca4;"></div>
<div class="a" style="left:837px;top:121.4px;width:1px;height:4px;background:#9c9ca4;"></div>
<div class="a" style="left:846px;top:121.4px;width:1px;height:4px;background:#9c9ca4;"></div>
<div class="a" style="left:740.5px;top:115px;width:4.5px;height:1px;background:#000;"></div>
<div class="a" style="left:841.2px;top:115px;width:5px;height:1px;background:#000;"></div>
<div class="a" style="left:843.2px;top:113px;width:1px;height:5px;background:#000;"></div>
<svg style="left:770px;top:120.5px" width="10" height="10" viewBox="0 0 10 10"><circle cx="5" cy="5" r="4.900" fill="#484fe8"/><circle cx="5" cy="5" r="1.600" fill="#a2a4dc"/></svg>
<div class="a" style="left:855px;top:108px;width:1px;height:55px;background:#cfcfd6;"></div>
<div class="a" style="left:858px;top:108px;width:1px;height:55px;background:#cfcfd6;"></div>
<div class="a" style="left:2px;top:163.2px;width:874px;height:30px;background:#f6f7fd;"></div>
<div class="a" style="left:12.8px;top:164.6px;width:27px;height:25.4px;background:#e8edfb;border-right:1px solid #b4bad0;border-bottom:1px solid #b4bad0"></div>
<svg style="left:19px;top:169px" width="18" height="15" viewBox="0 0 18 15"><path d="M1.6 1.600H16L8.800 13Z" fill="#6ecb70" stroke="#3f8f43" stroke-width="1" stroke-linejoin="round"/></svg>
<div class="t" style="left:41.80px;top:171.50px;font-size:11.00px;font-weight:bold;letter-spacing:-0.317px;">0</div>
<div class="a" style="left:8px;top:189.8px;width:1px;height:3.4px;background:#000;"></div>
<div class="a" style="left:33px;top:189.8px;width:1px;height:3.4px;background:#000;"></div>
<div class="a" style="left:58px;top:189.8px;width:1px;height:3.4px;background:#000;"></div>
<div class="a" style="left:83px;top:189.8px;width:1px;height:3.4px;background:#000;"></div>
<div class="a" style="left:108px;top:189.8px;width:1px;height:3.4px;background:#000;"></div>
<div class="a" style="left:158px;top:189.8px;width:1px;height:3.4px;background:#000;"></div>
<div class="a" style="left:183px;top:189.8px;width:1px;height:3.4px;background:#000;"></div>
<div class="a" style="left:208px;top:189.8px;width:1px;height:3.4px;background:#000;"></div>
<div class="a" style="left:258px;top:189.8px;width:1px;height:3.4px;background:#000;"></div>
<div class="a" style="left:283px;top:189.8px;width:1px;height:3.4px;background:#000;"></div>
<div class="a" style="left:308px;top:189.8px;width:1px;height:3.4px;background:#000;"></div>
<div class="a" style="left:358px;top:189.8px;width:1px;height:3.4px;background:#000;"></div>
<div class="a" style="left:383px;top:189.8px;width:1px;height:3.4px;background:#000;"></div>
<div class="a" style="left:408px;top:189.8px;width:1px;height:3.4px;background:#000;"></div>
<div class="a" style="left:458px;top:189.8px;width:1px;height:3.4px;background:#000;"></div>
<div class="a" style="left:483px;top:189.8px;width:1px;height:3.4px;background:#000;"></div>
<div class="a" style="left:508px;top:189.8px;width:1px;height:3.4px;background:#000;"></div>
<div class="a" style="left:558px;top:189.8px;width:1px;height:3.4px;background:#000;"></div>
<div class="a" style="left:583px;top:189.8px;width:1px;height:3.4px;background:#000;"></div>
<div class="a" style="left:608px;top:189.8px;width:1px;height:3.4px;background:#000;"></div>
<div class="a" style="left:658px;top:189.8px;width:1px;height:3.4px;background:#000;"></div>
<div class="a" style="left:683px;top:189.8px;width:1px;height:3.4px;background:#000;"></div>
<div class="a" style="left:708px;top:189.8px;width:1px;height:3.4px;background:#000;"></div>
<div class="a" style="left:758px;top:189.8px;width:1px;height:3.4px;background:#000;"></div>
<div class="a" style="left:783px;top:189.8px;width:1px;height:3.4px;background:#000;"></div>
<div class="a" style="left:808px;top:189.8px;width:1px;height:3.4px;background:#000;"></div>
<div class="a" style="left:858px;top:189.8px;width:1px;height:3.4px;background:#000;"></div>
<div class="a" style="left:133px;top:164.6px;width:1px;height:28.4px;background:#000;"></div>
<div class="a" style="left:133px;top:180px;width:2px;height:13px;background:#000;"></div>
<div class="t" style="left:131.00px;top:171.50px;font-size:11.00px;font-weight:bold;letter-spacing:-0.317px;">0</div>
<div class="a" style="left:233px;top:185.2px;width:1px;height:8px;background:#000;"></div>
<div class="t" style="left:221.90px;top:171.50px;font-size:11.00px;font-weight:bold;letter-spacing:0.297px;">1:00</div>
<div class="a" style="left:333px;top:185.2px;width:1px;height:8px;background:#000;"></div>
<div class="t" style="left:321.90px;top:171.50px;font-size:11.00px;font-weight:bold;letter-spacing:0.297px;">2:00</div>
<div class="a" style="left:433px;top:185.2px;width:1px;height:8px;background:#000;"></div>
<div class="t" style="left:421.90px;top:171.50px;font-size:11.00px;font-weight:bold;letter-spacing:0.297px;">3:00</div>
<div class="a" style="left:533px;top:185.2px;width:1px;height:8px;background:#000;"></div>
<div class="t" style="left:521.90px;top:171.50px;font-size:11.00px;font-weight:bold;letter-spacing:0.297px;">4:00</div>
<div class="a" style="left:633px;top:185.2px;width:1px;height:8px;background:#000;"></div>
<div class="t" style="left:621.90px;top:171.50px;font-size:11.00px;font-weight:bold;letter-spacing:0.297px;">5:00</div>
<div class="a" style="left:733px;top:185.2px;width:1px;height:8px;background:#000;"></div>
<div class="t" style="left:721.90px;top:171.50px;font-size:11.00px;font-weight:bold;letter-spacing:0.297px;">6:00</div>
<div class="a" style="left:833px;top:185.2px;width:1px;height:8px;background:#000;"></div>
<div class="t" style="left:821.90px;top:171.50px;font-size:11.00px;font-weight:bold;letter-spacing:0.297px;">7:00</div>
<div class="a" style="left:2px;top:192.6px;width:874px;height:1.5px;background:#000;"></div>
<div class="a" style="left:2px;top:194px;width:874px;height:11px;background:#dedede;"></div>
<div class="a" style="left:0px;top:163.2px;width:2px;height:42px;background:#c4c4c8;"></div>
<div class="a" style="left:1px;top:207px;width:857px;height:317px;background:#606585;"></div>
<div class="a" style="left:858px;top:207px;width:17px;height:317px;background:#f0f0f0;"></div>
<div class="a" style="left:858px;top:207px;width:17px;height:1px;background:#fbfbfb;"></div>
<div class="a" style="left:2px;top:205.6px;width:873px;height:1.5px;background:#000;"></div>
<div class="a" style="left:2px;top:204px;width:873px;height:2px;background:#ececec;"></div>
<div class="a" style="left:2px;top:208px;width:855px;height:302px;background:#d3cf86;"></div>
<div class="a" style="left:4px;top:210px;width:851px;height:298px;background:#ffff80;"></div>
<div class="a" style="left:5px;top:211px;width:849px;height:295.6px;background:#000;"></div>
<div class="a" style="left:6px;top:212px;width:95px;height:293px;background:#d6e2fb;"></div>
<div class="a" style="left:101px;top:248px;width:1px;height:257px;background:#000;"></div>
<div class="a" style="left:102px;top:212px;width:31px;height:293px;background:#d6e2fb;"></div>
<div class="a" style="left:133px;top:212px;width:1.3px;height:293px;background:#000;"></div>
<div class="a" style="left:134px;top:212px;width:718px;height:293px;background:#d8d8d8;"></div>
<div class="a" style="left:134px;top:230px;width:702.5px;height:275px;background:#c0c0c0;"></div>
<div class="a" style="left:133px;top:212.5px;width:704px;height:20px;background:#dcdcdc;border:1.2px solid #000;border-left-width:1px;border-bottom:none;border-radius:5.5px 5.5px 0 0"></div>
<div class="a" style="left:134px;top:230px;width:702px;height:3px;background:#c0c0c0;"></div>
<div class="a" style="left:836px;top:230px;width:1.1px;height:275px;background:#000;"></div>
<div class="t" style="left:139.60px;top:216.00px;font-size:12.00px;letter-spacing:-0.128px;">Tantacrul — CIMIM</div>
<div class="a" style="left:134px;top:366px;width:718px;height:1px;background:#000;"></div>
<div class="a" style="left:102px;top:366px;width:31px;height:1.2px;background:#fff;"></div>
<div class="a" style="left:102px;top:229px;width:31px;height:1px;background:#9a9aa2;"></div>
<div class="a" style="left:102px;top:230px;width:31px;height:1px;background:#fff;"></div>
<div class="a" style="left:102px;top:212px;width:31px;height:1px;background:#fff;"></div>
<div class="a" style="left:102px;top:212px;width:1px;height:17px;background:#fff;"></div>
<div class="a" style="left:127px;top:365px;width:6px;height:1px;background:#000;"></div>
<div class="a" style="left:127px;top:504px;width:6px;height:1px;background:#000;"></div>
<div class="a" style="left:6px;top:212px;width:18px;height:18px;background:#cdd8f0;border-top:1px solid #fff;border-left:1px solid #fff;border-right:1px solid #8c8c94;border-bottom:1px solid #8c8c94"></div>
<div class="a" style="left:24px;top:212px;width:78px;height:18px;background:#cdd8f0;border-top:1px solid #fff;border-left:1px solid #fff;border-right:1px solid #8c8c94;border-bottom:1px solid #8c8c94"></div>
<svg style="left:11px;top:217px" width="8" height="8" viewBox="0 0 8 8"><path d="M0.600 0.600L7.400 7.400M7.400 0.600L0.600 7.400" stroke="#000" stroke-width="1.4"/></svg>
<div class="t" style="left:27.60px;top:215.50px;font-size:11.00px;letter-spacing:-0.062px;">Tantacrul —</div>
<svg style="left:88px;top:218.4px" width="11" height="6" viewBox="0 0 11 6"><path d="M0.200 0H10.800L5.500 5.800Z" fill="#000"/></svg>
<div class="a" style="left:6px;top:230.5px;width:48px;height:17.5px;background:#cdd8f0;border-top:1px solid #fff;border-left:1px solid #fff;border-right:1px solid #8c8c94;border-bottom:1px solid #8c8c94"></div>
<div class="a" style="left:54px;top:230.5px;width:48px;height:17.5px;background:#cdd8f0;border-top:1px solid #fff;border-left:1px solid #fff;border-right:1px solid #8c8c94;border-bottom:1px solid #8c8c94"></div>
<div class="t" style="left:18.60px;top:233.75px;font-size:10.50px;letter-spacing:-0.335px;">Mute</div>
<div class="t" style="left:67.00px;top:233.75px;font-size:10.50px;letter-spacing:-0.154px;">Solo</div>
<div class="a" style="left:17.5px;top:264.7px;width:76px;height:1.5px;background:#9c9ca4;"></div>
<div class="a" style="left:17px;top:262px;width:1px;height:3px;background:#a0a0a8;"></div>
<div class="a" style="left:25px;top:262px;width:1px;height:3px;background:#a0a0a8;"></div>
<div class="a" style="left:33px;top:262px;width:1px;height:3px;background:#a0a0a8;"></div>
<div class="a" style="left:41px;top:262px;width:1px;height:3px;background:#a0a0a8;"></div>
<div class="a" style="left:49px;top:262px;width:1px;height:3px;background:#a0a0a8;"></div>
<div class="a" style="left:57px;top:262px;width:1px;height:3px;background:#a0a0a8;"></div>
<div class="a" style="left:65px;top:262px;width:1px;height:3px;background:#a0a0a8;"></div>
<div class="a" style="left:73px;top:262px;width:1px;height:3px;background:#a0a0a8;"></div>
<div class="a" style="left:81px;top:262px;width:1px;height:3px;background:#a0a0a8;"></div>
<div class="a" style="left:89px;top:262px;width:1px;height:3px;background:#a0a0a8;"></div>
<div class="a" style="left:92.5px;top:262px;width:1px;height:3px;background:#a0a0a8;"></div>
<svg style="left:48.7px;top:260.2px" width="10" height="10" viewBox="0 0 10 10"><circle cx="5" cy="5" r="4.900" fill="#484fe8"/><circle cx="5" cy="5" r="1.600" fill="#a2a4dc"/></svg>
<div class="a" style="left:17.5px;top:255.2px;width:4.4px;height:1px;background:#000;"></div>
<div class="a" style="left:85.2px;top:255.2px;width:5px;height:1px;background:#000;"></div>
<div class="a" style="left:87.2px;top:253.2px;width:1px;height:5px;background:#000;"></div>
<div class="a" style="left:17.5px;top:294.9px;width:76px;height:1.5px;background:#9c9ca4;"></div>
<div class="a" style="left:17px;top:292.2px;width:1px;height:3px;background:#a0a0a8;"></div>
<div class="a" style="left:25px;top:292.2px;width:1px;height:3px;background:#a0a0a8;"></div>
<div class="a" style="left:33px;top:292.2px;width:1px;height:3px;background:#a0a0a8;"></div>
<div class="a" style="left:41px;top:292.2px;width:1px;height:3px;background:#a0a0a8;"></div>
<div class="a" style="left:49px;top:292.2px;width:1px;height:3px;background:#a0a0a8;"></div>
<div class="a" style="left:57px;top:292.2px;width:1px;height:3px;background:#a0a0a8;"></div>
<div class="a" style="left:65px;top:292.2px;width:1px;height:3px;background:#a0a0a8;"></div>
<div class="a" style="left:73px;top:292.2px;width:1px;height:3px;background:#a0a0a8;"></div>
<div class="a" style="left:81px;top:292.2px;width:1px;height:3px;background:#a0a0a8;"></div>
<div class="a" style="left:89px;top:292.2px;width:1px;height:3px;background:#a0a0a8;"></div>
<div class="a" style="left:92.5px;top:292.2px;width:1px;height:3px;background:#a0a0a8;"></div>
<svg style="left:48.7px;top:290.4px" width="10" height="10" viewBox="0 0 10 10"><circle cx="5" cy="5" r="4.900" fill="#484fe8"/><circle cx="5" cy="5" r="1.600" fill="#a2a4dc"/></svg>
<div class="t" style="left:17.30px;top:279.75px;font-size:9.50px;">L</div>
<div class="t" style="left:83.60px;top:279.75px;font-size:9.50px;">R</div>
<div class="t" style="left:9.00px;top:310.75px;font-size:10.50px;letter-spacing:0.147px;">Stereo, 48000Hz</div>
<div class="t" style="left:9.00px;top:322.75px;font-size:10.50px;letter-spacing:0.131px;">32-bit float</div>
<div class="a" style="left:6px;top:487px;width:18px;height:18px;background:#cdd8f0;border-top:1px solid #fff;border-left:1px solid #fff;border-right:1px solid #8c8c94;border-bottom:1px solid #8c8c94"></div>
<div class="a" style="left:24px;top:487px;width:59px;height:18px;background:#cdd8f0;border-top:1px solid #fff;border-left:1px solid #fff;border-right:1px solid #8c8c94;border-bottom:1px solid #8c8c94"></div>
<svg style="left:10px;top:494px" width="12" height="7" viewBox="0 0 12 7"><path d="M0 6.500L5.700 0L11.400 6.500Z" fill="#000"/></svg>
<div class="t" style="left:40.20px;top:490.50px;font-size:11.00px;letter-spacing:-0.095px;">Select</div>
<div class="t" style="left:110.80px;top:232.00px;font-size:12.00px;font-weight:bold;letter-spacing:-0.227px;">1.0</div>
<div class="t" style="left:110.30px;top:259.00px;font-size:12.00px;letter-spacing:-0.293px;">0.5</div>
<div class="a" style="left:129.4px;top:264.2px;width:3.6px;height:1px;background:#000;"></div>
<div class="t" style="left:110.30px;top:292.00px;font-size:12.00px;font-weight:bold;letter-spacing:-0.093px;">0.0</div>
<div class="a" style="left:128.5px;top:297.2px;width:4.5px;height:2px;background:#000;"></div>
<div class="t" style="left:105.80px;top:326.00px;font-size:12.00px;letter-spacing:-0.119px;">-0.5</div>
<div class="a" style="left:129.4px;top:331.2px;width:3.6px;height:1px;background:#000;"></div>
<div class="t" style="left:106.40px;top:351.00px;font-size:12.00px;font-weight:bold;letter-spacing:-0.119px;">-1.0</div>
<div class="t" style="left:110.80px;top:369.00px;font-size:12.00px;font-weight:bold;letter-spacing:-0.227px;">1.0</div>
<div class="t" style="left:110.30px;top:396.00px;font-size:12.00px;letter-spacing:-0.293px;">0.5</div>
<div class="a" style="left:129.4px;top:401.2px;width:3.6px;height:1px;background:#000;"></div>
<div class="t" style="left:110.30px;top:430.00px;font-size:12.00px;font-weight:bold;letter-spacing:-0.093px;">0.0</div>
<div class="a" style="left:128.5px;top:435.2px;width:4.5px;height:2px;background:#000;"></div>
<div class="t" style="left:105.80px;top:465.00px;font-size:12.00px;letter-spacing:-0.119px;">-0.5</div>
<div class="a" style="left:129.4px;top:470.2px;width:3.6px;height:1px;background:#000;"></div>
<div class="t" style="left:106.40px;top:491.00px;font-size:12.00px;font-weight:bold;letter-spacing:-0.119px;">-1.0</div>
<svg style="left:0px;top:0px" width="876" height="622" viewBox="0 0 876 622"><path d="M134 294.0V294.0h1V292.3h1V290.8h1V291.0h1V290.5h1V290.7h1V290.5h1V291.3h1V290.9h1V290.4h1V285.4h1V273.8h1V268.0h1V288.4h1V289.0h1V289.9h1V291.5h1V289.8h1V291.3h1V289.1h1V290.7h1V290.1h1V289.1h1V289.0h1V288.1h1V278.3h1V265.0h1V288.0h1V283.6h1V289.0h1V288.3h1V285.5h1V284.7h1V286.4h1V286.3h1V286.3h1V287.9h1V283.4h1V276.4h1V286.3h1V284.9h1V286.3h1V285.9h1V285.9h1V284.9h1V282.4h1V286.5h1V283.9h1V283.0h1V276.4h1V285.0h1V281.2h1V281.4h1V284.3h1V279.7h1V280.7h1V279.6h1V278.8h1V275.5h1V278.2h1V273.6h1V273.0h1V278.4h1V278.4h1V280.0h1V281.9h1V280.6h1V277.1h1V281.2h1V280.3h1V277.5h1V279.1h1V279.1h1V275.3h1V273.0h1V275.5h1V274.5h1V270.9h1V275.7h1V269.0h1V275.2h1V268.9h1V271.0h1V267.3h1V271.1h1V260.7h1V272.3h1V275.8h1V268.5h1V267.0h1V272.7h1V273.8h1V263.8h1V268.6h1V266.8h1V264.7h1V261.7h1V256.3h1V255.6h1V259.4h1V264.4h1V268.2h1V236.5h1V253.9h1V258.6h1V277.3h1V287.4h1V286.3h1V286.9h1V285.0h1V288.8h1V284.1h1V286.0h1V286.4h1V280.5h1V262.4h1V273.9h1V286.1h1V283.8h1V283.9h1V286.3h1V285.7h1V280.5h1V283.4h1V279.3h1V274.0h1V284.9h1V281.4h1V275.3h1V270.5h1V254.0h1V264.9h1V280.4h1V280.2h1V274.5h1V279.2h1V279.8h1V281.6h1V281.6h1V275.6h1V277.2h1V270.5h1V257.1h1V247.0h1V268.8h1V268.7h1V271.4h1V263.6h1V264.4h1V258.0h1V270.7h1V268.0h1V258.0h1V251.0h1V267.0h1V270.1h1V269.4h1V260.2h1V264.0h1V266.9h1V252.6h1V257.7h1V247.0h1V260.9h1V256.6h1V261.2h1V268.1h1V286.2h1V285.0h1V285.5h1V285.1h1V260.0h1V277.6h1V285.9h1V287.2h1V289.3h1V287.5h1V288.5h1V290.2h1V291.3h1V292.7h1V291.8h1V291.2h1V278.0h1V284.5h1V292.1h1V291.5h1V294.3h1V293.5h1V281.9h1V274.0h1V285.7h1V287.5h1V279.0h1V282.1h1V285.5h1V287.2h1V289.3h1V290.0h1V293.2h1V291.3h1V269.7h1V270.0h1V275.6h1V272.5h1V275.0h1V266.7h1V267.0h1V270.0h1V271.8h1V271.5h1V270.2h1V279.3h1V280.3h1V285.7h1V287.5h1V292.5h1V283.2h1V279.3h1V272.3h1V276.3h1V267.1h1V271.1h1V274.2h1V260.5h1V255.2h1V265.2h1V246.0h1V268.4h1V270.4h1V269.3h1V262.6h1V254.7h1V244.4h1V270.7h1V271.2h1V264.8h1V260.4h1V261.5h1V263.6h1V252.8h1V247.3h1V263.0h1V255.8h1V248.3h1V250.4h1V269.8h1V274.7h1V265.7h1V255.3h1V254.1h1V250.6h1V251.6h1V237.5h1V236.5h1V250.6h1V240.0h1V242.7h1V243.9h1V245.8h1V231.5h1V241.5h1V237.5h1V246.3h1V245.6h1V240.8h1V236.5h1V237.6h1V242.5h1V248.5h1V238.9h1V236.9h1V235.1h1V244.9h1V233.3h1V247.3h1V246.8h1V235.4h1V244.1h1V246.3h1V247.2h1V248.9h1V231.5h1V241.0h1V238.6h1V236.4h1V248.1h1V245.5h1V245.1h1V244.0h1V238.1h1V242.5h1V240.9h1V249.7h1V248.7h1V239.6h1V232.9h1V245.3h1V237.7h1V247.4h1V231.5h1V231.5h1V254.9h1V257.8h1V253.3h1V250.0h1V246.9h1V259.7h1V264.6h1V256.6h1V259.1h1V254.5h1V259.4h1V258.8h1V255.4h1V252.8h1V265.2h1V271.3h1V264.6h1V263.6h1V272.7h1V277.6h1V276.4h1V278.7h1V280.7h1V282.6h1V285.2h1V283.7h1V278.1h1V287.7h1V286.3h1V285.5h1V285.5h1V284.1h1V283.4h1V286.6h1V284.6h1V278.0h1V281.8h1V288.9h1V290.4h1V292.4h1V292.2h1V293.6h1V293.8h1V294.0h1V295.1h1V295.5h1V295.6h1V295.6h1V295.3h1V295.3h1V287.0h1V290.8h1V295.6h1V295.5h1V283.0h1V289.8h1V296.1h1V296.3h1V296.5h1V296.5h1V296.5h1V296.5h1V296.2h1V292.8h1V288.0h1V291.8h1V295.6h1V295.7h1V289.0h1V293.3h1V294.6h1V295.1h1V294.4h1V293.5h1V293.8h1V293.3h1V293.2h1V292.9h1V292.8h1V292.6h1V286.0h1V289.8h1V294.6h1V294.3h1V285.0h1V290.1h1V295.1h1V295.1h1V294.3h1V293.0h1V294.0h1V293.3h1V292.4h1V293.9h1V292.6h1V290.1h1V289.2h1V286.8h1V285.0h1V285.0h1V284.8h1V285.3h1V275.0h1V281.3h1V289.5h1V295.9h1V295.3h1V294.7h1V292.9h1V294.6h1V294.2h1V294.0h1V294.3h1V283.0h1V290.3h1V294.1h1V291.7h1V286.0h1V292.9h1V291.2h1V289.7h1V286.0h1V294.6h1V295.4h1V295.3h1V294.0h1V294.9h1V291.0h1V289.0h1V288.0h1V287.1h1V287.3h1V287.7h1V286.2h1V286.2h1V283.8h1V277.0h1V277.2h1V287.0h1V286.6h1V285.0h1V284.9h1V284.6h1V287.4h1V285.9h1V287.0h1V286.0h1V283.4h1V285.6h1V281.1h1V285.0h1V284.6h1V283.6h1V287.4h1V285.9h1V287.1h1V286.6h1V283.3h1V287.4h1V282.3h1V286.3h1V285.9h1V279.3h1V281.1h1V284.7h1V282.2h1V280.1h1V278.3h1V281.7h1V281.1h1V283.8h1V280.7h1V283.1h1V280.9h1V279.1h1V284.2h1V279.9h1V282.7h1V280.3h1V280.5h1V277.5h1V275.3h1V271.6h1V272.4h1V265.0h1V267.9h1V279.2h1V279.3h1V279.7h1V273.9h1V275.8h1V267.2h1V262.3h1V261.6h1V264.7h1V267.0h1V274.9h1V277.2h1V281.2h1V283.3h1V279.1h1V278.5h1V267.0h1V275.1h1V282.9h1V279.9h1V280.7h1V280.5h1V280.8h1V278.4h1V276.5h1V273.4h1V275.5h1V276.3h1V280.7h1V277.0h1V272.9h1V263.5h1V268.0h1V277.0h1V275.7h1V276.6h1V272.2h1V269.8h1V266.0h1V263.9h1V271.4h1V262.3h1V252.3h1V249.5h1V261.1h1V266.3h1V261.7h1V272.4h1V265.1h1V270.8h1V267.2h1V269.6h1V273.0h1V269.4h1V264.7h1V272.5h1V276.1h1V277.0h1V277.7h1V277.9h1V276.7h1V278.5h1V281.2h1V284.0h1V287.9h1V290.2h1V294.5h1V295.0h1V295.8h1V293.7h1V289.6h1V285.9h1V283.3h1V279.4h1V281.1h1V283.4h1V283.0h1V281.0h1V283.1h1V285.6h1V283.0h1V277.2h1V274.4h1V273.0h1V281.4h1V283.2h1V285.8h1V289.3h1V287.3h1V285.4h1V286.7h1V288.0h1V286.7h1V284.5h1V277.0h1V274.7h1V282.8h1V280.0h1V279.6h1V287.3h1V290.4h1V288.5h1V285.5h1V273.0h1V279.9h1V272.1h1V273.0h1V285.0h1V290.2h1V289.7h1V290.3h1V286.1h1V289.7h1V289.3h1V289.7h1V287.9h1V287.1h1V287.9h1V290.3h1V293.9h1V294.2h1V292.0h1V289.1h1V289.8h1V288.5h1V287.1h1V287.2h1V289.4h1V290.1h1V292.4h1V293.0h1V294.1h1V290.6h1V288.5h1V287.8h1V288.7h1V290.2h1V290.7h1V291.2h1V293.4h1V294.4h1V295.1h1V295.2h1V295.6h1V295.8h1V295.6h1V295.6h1V295.8h1V295.9h1V296.1h1V296.2h1V296.3h1V296.4h1V296.5h1V296.7h1V296.8h1V297.0h1V297.1h1V297.2h1V297.2h1V297.2h1V297.2h1V297.2h1V297.2h1V297.2h1V297.2h1V297.2h1V297.2h1V297.2h1V297.2h1V297.2h1V297.2h1V297.3h1V297.3h1V287.2h1V281.0h1V286.8h1V289.1h1V289.0h1V290.2h1V286.8h1V288.1h1V288.6h1V287.9h1V287.1h1V287.1h1V286.9h1V290.2h1V289.1h1V289.7h1V290.3h1V289.6h1V292.4h1V291.4h1V290.0h1V284.0h1V286.3h1V289.2h1V290.1h1V288.7h1V292.6h1V297.4h1V297.4h1V297.4h1V297.4h1V297.4h1V297.4h1V297.4h1V297.4h1V297.4h1V297.4h1V297.4h1V297.4h1V297.4h1V298.6h-1V298.6h-1V298.6h-1V298.6h-1V298.6h-1V298.6h-1V298.6h-1V298.6h-1V298.6h-1V298.6h-1V298.6h-1V298.6h-1V298.6h-1V304.0h-1V305.5h-1V307.8h-1V307.2h-1V309.2h-1V316.0h-1V304.9h-1V303.6h-1V304.6h-1V304.6h-1V305.4h-1V313.0h-1V307.1h-1V305.2h-1V308.7h-1V315.0h-1V310.7h-1V307.2h-1V308.7h-1V315.0h-1V306.8h-1V308.2h-1V306.7h-1V307.0h-1V310.1h-1V323.0h-1V306.5h-1V298.7h-1V298.7h-1V298.8h-1V298.8h-1V298.8h-1V298.8h-1V298.8h-1V298.8h-1V298.8h-1V298.8h-1V298.8h-1V298.8h-1V298.8h-1V298.8h-1V298.8h-1V298.8h-1V298.9h-1V299.0h-1V299.2h-1V299.3h-1V299.5h-1V299.6h-1V299.7h-1V299.8h-1V299.9h-1V299.9h-1V300.0h-1V300.1h-1V299.9h-1V300.5h-1V301.1h-1V300.8h-1V300.6h-1V301.7h-1V304.4h-1V303.6h-1V303.8h-1V306.2h-1V305.7h-1V306.3h-1V306.5h-1V305.6h-1V302.8h-1V301.7h-1V303.2h-1V304.6h-1V308.1h-1V306.7h-1V309.7h-1V307.9h-1V305.4h-1V307.1h-1V302.8h-1V301.4h-1V302.0h-1V303.5h-1V306.5h-1V306.1h-1V305.8h-1V306.9h-1V305.5h-1V307.2h-1V306.7h-1V305.9h-1V305.3h-1V306.3h-1V312.0h-1V328.0h-1V314.0h-1V318.0h-1V326.0h-1V314.0h-1V306.3h-1V306.0h-1V309.0h-1V313.4h-1V313.2h-1V312.0h-1V315.7h-1V318.0h-1V310.6h-1V307.4h-1V308.3h-1V308.7h-1V309.1h-1V309.9h-1V305.7h-1V307.4h-1V313.0h-1V315.5h-1V321.0h-1V321.7h-1V317.6h-1V311.5h-1V309.6h-1V309.8h-1V314.3h-1V311.9h-1V313.2h-1V316.6h-1V315.6h-1V309.8h-1V308.9h-1V304.7h-1V302.9h-1V300.3h-1V301.2h-1V301.8h-1V304.8h-1V307.3h-1V309.3h-1V313.0h-1V316.5h-1V319.3h-1V320.4h-1V319.0h-1V320.3h-1V317.0h-1V318.7h-1V329.8h-1V324.7h-1V323.6h-1V322.5h-1V326.5h-1V324.9h-1V325.5h-1V329.8h-1V321.4h-1V329.8h-1V328.9h-1V326.9h-1V336.0h-1V327.3h-1V323.4h-1V334.3h-1V328.6h-1V318.3h-1V320.4h-1V317.7h-1V318.3h-1V323.3h-1V322.4h-1V324.7h-1V321.7h-1V316.5h-1V317.6h-1V317.3h-1V319.1h-1V321.4h-1V317.1h-1V316.4h-1V313.3h-1V314.7h-1V314.1h-1V314.7h-1V311.3h-1V319.3h-1V326.0h-1V316.1h-1V313.4h-1V313.7h-1V312.5h-1V319.9h-1V318.1h-1V322.7h-1V332.7h-1V336.0h-1V332.5h-1V324.0h-1V320.1h-1V323.4h-1V313.8h-1V313.4h-1V324.5h-1V322.2h-1V324.0h-1V323.1h-1V320.6h-1V319.2h-1V315.2h-1V318.5h-1V313.8h-1V316.3h-1V314.8h-1V314.7h-1V314.2h-1V312.1h-1V310.7h-1V311.5h-1V314.5h-1V315.8h-1V316.3h-1V322.0h-1V314.4h-1V314.3h-1V313.8h-1V313.2h-1V315.7h-1V312.5h-1V309.1h-1V311.4h-1V309.5h-1V311.7h-1V309.2h-1V309.5h-1V308.2h-1V309.5h-1V310.4h-1V313.1h-1V308.5h-1V310.2h-1V308.7h-1V311.3h-1V312.7h-1V308.6h-1V309.3h-1V307.9h-1V308.2h-1V308.1h-1V309.4h-1V309.7h-1V311.6h-1V314.4h-1V321.0h-1V308.2h-1V310.1h-1V308.8h-1V310.2h-1V308.0h-1V307.8h-1V306.9h-1V306.8h-1V303.2h-1V301.1h-1V300.7h-1V300.7h-1V300.6h-1V301.9h-1V310.0h-1V304.9h-1V303.2h-1V301.9h-1V310.0h-1V305.1h-1V302.3h-1V307.5h-1V315.0h-1V301.4h-1V302.4h-1V301.5h-1V301.8h-1V301.7h-1V301.4h-1V300.9h-1V300.4h-1V304.8h-1V313.3h-1V321.0h-1V309.2h-1V308.9h-1V306.5h-1V310.9h-1V305.4h-1V305.2h-1V304.9h-1V302.5h-1V302.4h-1V302.6h-1V303.5h-1V302.9h-1V303.5h-1V302.0h-1V300.5h-1V300.9h-1V306.9h-1V313.0h-1V301.9h-1V301.8h-1V305.6h-1V311.0h-1V303.7h-1V302.0h-1V302.7h-1V302.3h-1V302.9h-1V302.7h-1V301.6h-1V301.4h-1V300.5h-1V300.9h-1V303.7h-1V309.0h-1V300.4h-1V300.0h-1V304.2h-1V311.0h-1V303.2h-1V299.8h-1V299.5h-1V299.5h-1V299.5h-1V299.5h-1V299.7h-1V299.9h-1V304.6h-1V314.0h-1V300.1h-1V300.2h-1V303.5h-1V311.0h-1V300.4h-1V300.4h-1V300.4h-1V300.3h-1V300.4h-1V301.2h-1V301.8h-1V301.8h-1V303.3h-1V303.1h-1V302.8h-1V305.7h-1V306.9h-1V313.7h-1V317.0h-1V312.1h-1V310.5h-1V310.0h-1V308.5h-1V311.1h-1V308.4h-1V306.0h-1V305.5h-1V311.0h-1V313.4h-1V308.4h-1V310.9h-1V313.7h-1V317.1h-1V318.4h-1V320.4h-1V330.4h-1V326.7h-1V326.7h-1V327.9h-1V331.1h-1V339.2h-1V338.7h-1V329.6h-1V336.9h-1V348.4h-1V338.4h-1V335.5h-1V329.1h-1V331.6h-1V336.7h-1V342.5h-1V332.5h-1V336.3h-1V336.1h-1V344.4h-1V359.0h-1V351.1h-1V346.5h-1V347.0h-1V356.0h-1V358.1h-1V350.1h-1V348.0h-1V349.3h-1V346.1h-1V342.6h-1V355.7h-1V344.6h-1V347.9h-1V346.9h-1V345.2h-1V343.6h-1V359.5h-1V351.5h-1V353.6h-1V346.0h-1V345.8h-1V349.0h-1V348.7h-1V347.3h-1V346.8h-1V349.5h-1V360.0h-1V342.3h-1V346.0h-1V345.8h-1V345.2h-1V344.7h-1V344.0h-1V357.8h-1V351.8h-1V348.8h-1V353.2h-1V350.1h-1V341.3h-1V348.7h-1V353.9h-1V348.6h-1V355.0h-1V350.2h-1V345.1h-1V342.3h-1V340.2h-1V346.4h-1V350.1h-1V349.4h-1V336.6h-1V332.8h-1V326.1h-1V323.8h-1V333.8h-1V353.5h-1V334.0h-1V334.0h-1V342.0h-1V338.1h-1V331.3h-1V336.3h-1V336.2h-1V325.5h-1V324.6h-1V328.4h-1V340.7h-1V333.6h-1V328.3h-1V328.5h-1V324.3h-1V330.9h-1V348.0h-1V328.9h-1V346.0h-1V328.2h-1V320.8h-1V324.5h-1V328.9h-1V316.4h-1V320.5h-1V314.0h-1V310.1h-1V302.8h-1V307.3h-1V310.7h-1V315.2h-1V313.8h-1V321.2h-1V322.9h-1V322.9h-1V321.6h-1V324.5h-1V323.6h-1V320.7h-1V322.3h-1V324.6h-1V323.6h-1V320.4h-1V304.4h-1V302.0h-1V304.4h-1V307.0h-1V310.6h-1V310.6h-1V311.4h-1V316.1h-1V308.6h-1V307.4h-1V321.0h-1V310.8h-1V302.3h-1V301.1h-1V302.7h-1V304.6h-1V311.4h-1V318.0h-1V304.9h-1V303.9h-1V304.7h-1V304.9h-1V306.5h-1V307.5h-1V306.1h-1V307.0h-1V308.8h-1V311.0h-1V322.2h-1V333.0h-1V311.0h-1V312.1h-1V309.7h-1V308.1h-1V325.8h-1V343.2h-1V341.5h-1V330.1h-1V341.0h-1V334.0h-1V338.8h-1V327.5h-1V328.2h-1V329.8h-1V324.9h-1V321.6h-1V325.9h-1V339.0h-1V333.7h-1V327.6h-1V322.9h-1V335.1h-1V328.5h-1V326.0h-1V332.8h-1V325.5h-1V331.9h-1V342.0h-1V338.8h-1V323.5h-1V320.7h-1V316.2h-1V316.4h-1V312.5h-1V312.0h-1V316.6h-1V312.2h-1V315.5h-1V315.9h-1V323.9h-1V343.0h-1V332.7h-1V319.7h-1V315.8h-1V310.2h-1V323.5h-1V315.6h-1V310.5h-1V309.6h-1V310.8h-1V309.6h-1V308.0h-1V313.2h-1V310.1h-1V324.0h-1V324.6h-1V313.1h-1V307.9h-1V309.4h-1V309.2h-1V309.3h-1V308.6h-1V308.2h-1V307.6h-1V308.3h-1V317.6h-1V333.8h-1V349.0h-1V347.0h-1V334.3h-1V330.0h-1V334.5h-1V335.7h-1V334.4h-1V326.5h-1V331.8h-1V321.9h-1V322.0h-1V318.5h-1V320.7h-1V320.8h-1V324.7h-1V333.3h-1V325.1h-1V320.5h-1V326.2h-1V319.0h-1V328.8h-1V326.8h-1V324.6h-1V322.0h-1V331.3h-1V318.9h-1V321.0h-1V320.4h-1V318.6h-1V321.3h-1V317.8h-1V312.5h-1V315.9h-1V317.5h-1V316.1h-1V315.2h-1V319.0h-1V314.2h-1V316.9h-1V319.5h-1V319.6h-1V316.3h-1V320.1h-1V317.8h-1V313.7h-1V314.5h-1V314.0h-1V315.5h-1V313.1h-1V315.8h-1V313.3h-1V311.3h-1V315.3h-1V312.3h-1V320.0h-1V312.8h-1V308.7h-1V310.0h-1V312.5h-1V311.5h-1V312.1h-1V308.3h-1V310.6h-1V310.5h-1V310.1h-1V321.0h-1V315.4h-1V308.6h-1V307.2h-1V309.4h-1V309.4h-1V309.2h-1V308.0h-1V308.6h-1V306.7h-1V307.0h-1V308.3h-1V321.0h-1V314.0h-1V304.9h-1V304.7h-1V306.1h-1V305.5h-1V305.6h-1V306.2h-1V306.2h-1V304.2h-1V304.1h-1V305.5h-1V304.9h-1V306.8h-1V325.0h-1V318.1h-1V310.6h-1V306.1h-1V305.7h-1V305.7h-1V305.2h-1V304.3h-1V306.0h-1V306.7h-1V304.0h-1V302.7h-1V301.9h-1Z" fill="#3232c8" shape-rendering="crispEdges"/><path d="M134 296.3V296.3h1V295.8h1V295.5h1V295.1h1V295.2h1V294.8h1V295.0h1V294.9h1V294.8h1V294.8h1V294.7h1V295.1h1V294.7h1V295.3h1V295.2h1V295.0h1V295.1h1V294.9h1V294.8h1V294.9h1V294.6h1V295.1h1V294.7h1V294.7h1V295.0h1V294.9h1V295.0h1V294.9h1V294.7h1V294.9h1V294.5h1V294.3h1V294.6h1V294.5h1V294.3h1V294.3h1V294.4h1V294.3h1V294.1h1V294.0h1V294.2h1V293.8h1V294.2h1V293.6h1V293.6h1V293.9h1V293.5h1V293.8h1V293.7h1V293.5h1V293.2h1V293.7h1V293.6h1V293.0h1V293.1h1V293.4h1V292.8h1V293.3h1V292.7h1V292.4h1V292.4h1V292.2h1V292.7h1V292.5h1V292.0h1V292.0h1V291.8h1V292.6h1V291.9h1V292.1h1V291.3h1V291.8h1V291.9h1V292.2h1V291.0h1V291.6h1V291.9h1V292.0h1V291.5h1V291.0h1V291.2h1V291.6h1V290.6h1V290.6h1V291.3h1V290.5h1V290.4h1V291.2h1V290.7h1V291.2h1V290.4h1V289.7h1V290.4h1V290.4h1V290.7h1V290.6h1V289.7h1V289.9h1V289.4h1V289.1h1V289.3h1V289.8h1V289.7h1V291.0h1V290.9h1V293.0h1V293.9h1V293.7h1V293.6h1V293.8h1V294.3h1V294.1h1V293.9h1V294.4h1V294.0h1V293.4h1V293.2h1V293.5h1V293.2h1V293.6h1V293.0h1V292.4h1V292.3h1V292.2h1V292.3h1V291.2h1V291.3h1V290.9h1V291.3h1V291.4h1V290.5h1V290.1h1V290.4h1V290.9h1V290.2h1V290.5h1V289.6h1V290.0h1V288.9h1V289.8h1V289.6h1V289.7h1V288.4h1V289.5h1V288.7h1V288.0h1V289.3h1V289.1h1V287.9h1V287.8h1V288.3h1V288.4h1V287.5h1V287.2h1V288.2h1V288.3h1V287.1h1V287.5h1V287.4h1V288.7h1V288.9h1V288.7h1V287.8h1V288.8h1V289.6h1V290.4h1V291.2h1V291.8h1V292.6h1V292.1h1V293.4h1V292.8h1V293.3h1V293.7h1V293.5h1V293.7h1V294.2h1V294.5h1V294.9h1V294.7h1V294.7h1V295.0h1V294.9h1V295.2h1V295.5h1V295.5h1V295.6h1V295.4h1V295.4h1V295.1h1V295.0h1V295.0h1V294.9h1V295.1h1V295.7h1V295.5h1V296.0h1V295.9h1V296.3h1V296.5h1V295.7h1V293.4h1V293.9h1V293.6h1V293.1h1V293.4h1V293.2h1V293.5h1V293.0h1V292.6h1V293.0h1V292.9h1V293.6h1V294.6h1V295.0h1V295.4h1V296.1h1V294.9h1V292.5h1V290.7h1V289.0h1V287.0h1V287.5h1V287.7h1V285.7h1V285.3h1V285.0h1V285.4h1V286.9h1V286.6h1V285.4h1V284.7h1V286.7h1V285.5h1V284.8h1V286.1h1V286.7h1V285.5h1V285.9h1V284.6h1V286.3h1V286.2h1V286.2h1V285.5h1V285.3h1V286.7h1V284.6h1V284.4h1V284.2h1V280.7h1V281.7h1V279.7h1V281.5h1V279.5h1V279.4h1V281.4h1V281.5h1V279.1h1V280.8h1V280.4h1V280.1h1V279.0h1V279.8h1V278.6h1V279.4h1V279.6h1V278.9h1V281.1h1V281.4h1V278.1h1V281.0h1V279.0h1V280.2h1V278.9h1V280.9h1V281.7h1V281.3h1V279.3h1V279.1h1V280.8h1V281.4h1V278.6h1V278.1h1V278.0h1V281.1h1V280.0h1V280.8h1V279.0h1V279.9h1V279.5h1V280.2h1V279.8h1V280.7h1V279.6h1V280.0h1V279.7h1V279.6h1V279.0h1V281.9h1V280.9h1V281.5h1V281.4h1V281.8h1V281.7h1V283.8h1V282.4h1V284.2h1V284.4h1V284.7h1V284.5h1V285.4h1V286.8h1V286.5h1V287.1h1V287.4h1V287.1h1V288.9h1V289.4h1V288.5h1V290.5h1V290.5h1V291.0h1V291.1h1V291.7h1V291.8h1V293.3h1V293.4h1V293.9h1V294.0h1V294.4h1V294.2h1V293.5h1V294.0h1V292.9h1V292.5h1V292.8h1V292.5h1V293.1h1V293.3h1V293.8h1V294.4h1V295.3h1V295.7h1V295.8h1V296.2h1V296.1h1V296.4h1V296.7h1V296.8h1V296.7h1V296.9h1V296.8h1V296.8h1V296.8h1V296.8h1V296.7h1V296.9h1V296.8h1V296.7h1V296.7h1V296.9h1V296.8h1V296.8h1V296.9h1V296.9h1V296.7h1V296.8h1V296.7h1V296.6h1V296.7h1V296.6h1V296.6h1V296.5h1V296.2h1V296.3h1V296.1h1V296.0h1V296.3h1V296.2h1V296.2h1V295.9h1V295.9h1V296.1h1V295.9h1V296.1h1V295.9h1V296.0h1V296.1h1V296.3h1V296.3h1V296.3h1V296.2h1V296.2h1V295.8h1V296.0h1V295.8h1V295.5h1V295.6h1V295.0h1V294.8h1V295.0h1V294.3h1V294.9h1V294.7h1V294.5h1V295.1h1V296.0h1V296.8h1V296.7h1V296.6h1V296.4h1V296.5h1V296.6h1V296.6h1V296.4h1V296.4h1V296.6h1V296.4h1V296.5h1V296.4h1V296.4h1V296.5h1V296.6h1V296.6h1V296.6h1V296.4h1V296.4h1V296.0h1V295.6h1V295.1h1V294.7h1V294.4h1V293.6h1V293.7h1V293.6h1V293.5h1V293.7h1V293.5h1V293.1h1V293.8h1V293.3h1V293.6h1V293.3h1V293.7h1V293.7h1V293.8h1V293.3h1V293.7h1V293.7h1V293.5h1V293.9h1V293.8h1V293.1h1V293.3h1V293.3h1V293.4h1V293.2h1V293.1h1V292.7h1V292.6h1V292.9h1V292.4h1V293.2h1V292.4h1V292.0h1V292.3h1V292.0h1V291.5h1V291.7h1V292.0h1V292.2h1V292.0h1V292.1h1V291.4h1V292.2h1V291.7h1V292.1h1V291.5h1V292.4h1V291.8h1V292.2h1V292.1h1V291.5h1V290.3h1V290.3h1V290.2h1V289.3h1V289.8h1V289.2h1V289.2h1V289.5h1V289.7h1V289.1h1V288.6h1V287.7h1V287.4h1V289.0h1V288.1h1V289.5h1V291.0h1V290.7h1V290.2h1V291.5h1V291.4h1V291.1h1V291.9h1V291.6h1V291.6h1V292.1h1V292.0h1V291.5h1V291.2h1V291.0h1V291.1h1V290.8h1V291.7h1V290.4h1V290.9h1V289.5h1V289.2h1V289.9h1V289.4h1V290.0h1V288.9h1V289.7h1V289.1h1V289.8h1V288.8h1V288.7h1V288.5h1V287.9h1V288.2h1V288.1h1V289.6h1V289.8h1V288.3h1V288.4h1V289.4h1V289.1h1V290.0h1V289.7h1V290.6h1V290.4h1V290.7h1V290.8h1V292.0h1V292.0h1V292.4h1V292.2h1V293.2h1V294.0h1V294.5h1V294.9h1V295.7h1V296.0h1V296.6h1V296.9h1V296.5h1V295.3h1V294.5h1V294.4h1V293.1h1V293.2h1V292.5h1V292.5h1V292.6h1V293.2h1V293.0h1V292.1h1V292.5h1V292.6h1V292.6h1V292.8h1V293.5h1V293.7h1V293.9h1V293.7h1V293.7h1V293.2h1V293.2h1V293.0h1V293.2h1V292.5h1V292.4h1V292.7h1V293.0h1V292.3h1V293.6h1V293.8h1V294.1h1V292.7h1V292.3h1V291.9h1V292.9h1V293.2h1V293.1h1V294.5h1V294.3h1V294.7h1V294.7h1V294.4h1V294.8h1V294.8h1V294.4h1V294.3h1V295.1h1V295.5h1V296.3h1V296.5h1V296.0h1V295.6h1V295.0h1V294.5h1V294.4h1V294.4h1V294.8h1V295.5h1V295.7h1V296.1h1V296.5h1V295.7h1V295.5h1V295.3h1V295.2h1V295.1h1V295.2h1V295.7h1V295.9h1V296.1h1V296.3h1V296.4h1V296.7h1V296.7h1V296.8h1V297.0h1V297.0h1V296.9h1V297.0h1V297.0h1V297.2h1V297.2h1V297.2h1V297.2h1V297.4h1V297.5h1V297.5h1V297.5h1V297.5h1V297.5h1V297.5h1V297.5h1V297.5h1V297.5h1V297.5h1V297.5h1V297.5h1V297.5h1V297.5h1V297.5h1V297.5h1V297.5h1V297.5h1V296.8h1V293.3h1V293.2h1V294.2h1V294.3h1V294.1h1V293.8h1V293.5h1V293.8h1V293.9h1V293.6h1V293.2h1V293.4h1V293.1h1V293.6h1V294.2h1V294.7h1V295.3h1V295.0h1V294.8h1V294.2h1V293.3h1V293.5h1V293.8h1V293.4h1V294.1h1V295.6h1V297.5h1V297.5h1V297.5h1V297.5h1V297.5h1V297.5h1V297.5h1V297.5h1V297.5h1V297.5h1V297.5h1V297.5h1V297.5h1V298.5h-1V298.5h-1V298.5h-1V298.5h-1V298.5h-1V298.5h-1V298.5h-1V298.5h-1V298.5h-1V298.5h-1V298.5h-1V298.5h-1V298.5h-1V300.4h-1V301.9h-1V302.6h-1V302.2h-1V302.5h-1V302.7h-1V301.8h-1V301.2h-1V301.0h-1V300.7h-1V301.3h-1V301.8h-1V302.4h-1V302.9h-1V302.6h-1V302.8h-1V302.4h-1V302.1h-1V302.2h-1V302.5h-1V302.2h-1V301.9h-1V301.7h-1V301.8h-1V302.8h-1V302.7h-1V299.2h-1V298.5h-1V298.5h-1V298.5h-1V298.5h-1V298.5h-1V298.5h-1V298.5h-1V298.5h-1V298.5h-1V298.5h-1V298.5h-1V298.5h-1V298.5h-1V298.5h-1V298.5h-1V298.5h-1V298.5h-1V298.5h-1V298.6h-1V298.8h-1V298.8h-1V298.8h-1V298.8h-1V299.0h-1V299.0h-1V299.1h-1V299.0h-1V299.0h-1V299.2h-1V299.3h-1V299.3h-1V299.6h-1V299.7h-1V299.9h-1V300.1h-1V300.3h-1V300.8h-1V300.9h-1V300.8h-1V300.7h-1V300.5h-1V300.3h-1V299.5h-1V299.9h-1V300.3h-1V300.5h-1V301.2h-1V301.6h-1V301.6h-1V301.5h-1V301.0h-1V300.4h-1V300.0h-1V299.5h-1V299.7h-1V300.5h-1V300.9h-1V301.7h-1V301.6h-1V301.2h-1V301.2h-1V301.6h-1V301.3h-1V301.3h-1V301.7h-1V301.5h-1V302.9h-1V302.8h-1V303.1h-1V304.1h-1V303.7h-1V303.3h-1V301.9h-1V302.2h-1V302.4h-1V303.7h-1V303.0h-1V303.3h-1V303.6h-1V303.5h-1V302.8h-1V303.0h-1V302.8h-1V302.8h-1V302.3h-1V302.3h-1V302.1h-1V302.3h-1V302.5h-1V303.2h-1V303.4h-1V303.4h-1V303.5h-1V303.9h-1V303.0h-1V302.8h-1V303.4h-1V303.5h-1V303.5h-1V302.8h-1V302.9h-1V301.6h-1V301.5h-1V300.7h-1V299.5h-1V299.1h-1V299.4h-1V300.0h-1V300.3h-1V301.1h-1V301.5h-1V302.0h-1V302.8h-1V303.8h-1V303.6h-1V304.0h-1V304.0h-1V305.2h-1V305.3h-1V305.6h-1V305.4h-1V306.3h-1V306.0h-1V306.9h-1V306.6h-1V307.6h-1V307.7h-1V306.2h-1V306.4h-1V307.9h-1V307.8h-1V308.1h-1V307.5h-1V307.3h-1V307.2h-1V306.2h-1V306.9h-1V306.3h-1V307.1h-1V306.0h-1V306.6h-1V306.1h-1V306.8h-1V306.5h-1V305.1h-1V305.6h-1V304.3h-1V305.2h-1V304.9h-1V305.0h-1V304.8h-1V304.5h-1V304.0h-1V303.9h-1V304.4h-1V304.4h-1V304.1h-1V304.9h-1V304.6h-1V304.5h-1V305.8h-1V305.3h-1V305.0h-1V306.5h-1V307.9h-1V307.0h-1V308.6h-1V308.3h-1V307.4h-1V306.9h-1V306.3h-1V306.5h-1V306.8h-1V306.8h-1V306.2h-1V306.7h-1V305.8h-1V305.7h-1V305.7h-1V304.5h-1V303.9h-1V303.8h-1V304.2h-1V303.6h-1V304.5h-1V303.9h-1V304.3h-1V303.8h-1V304.6h-1V303.9h-1V304.0h-1V303.8h-1V304.0h-1V304.3h-1V304.5h-1V304.0h-1V303.7h-1V304.0h-1V303.6h-1V302.8h-1V303.6h-1V303.1h-1V303.4h-1V303.3h-1V302.9h-1V302.8h-1V302.6h-1V302.7h-1V302.7h-1V302.9h-1V302.2h-1V302.1h-1V302.5h-1V302.3h-1V302.3h-1V302.7h-1V302.2h-1V302.3h-1V302.3h-1V302.7h-1V302.4h-1V302.7h-1V302.2h-1V302.9h-1V302.5h-1V302.3h-1V302.5h-1V302.4h-1V302.3h-1V302.4h-1V301.6h-1V301.3h-1V300.9h-1V300.4h-1V300.0h-1V299.6h-1V299.6h-1V299.4h-1V299.4h-1V299.4h-1V299.5h-1V299.6h-1V299.6h-1V299.5h-1V299.6h-1V299.4h-1V299.6h-1V299.6h-1V299.4h-1V299.4h-1V299.5h-1V299.6h-1V299.4h-1V299.3h-1V299.2h-1V300.0h-1V300.9h-1V301.5h-1V301.3h-1V301.1h-1V301.7h-1V301.0h-1V301.2h-1V301.0h-1V300.4h-1V300.5h-1V300.2h-1V300.0h-1V300.2h-1V299.8h-1V299.8h-1V299.7h-1V299.7h-1V299.7h-1V299.9h-1V300.0h-1V300.1h-1V299.9h-1V300.1h-1V299.9h-1V300.1h-1V300.1h-1V299.8h-1V299.8h-1V299.7h-1V300.0h-1V299.9h-1V299.7h-1V299.8h-1V299.5h-1V299.4h-1V299.4h-1V299.3h-1V299.4h-1V299.3h-1V299.2h-1V299.3h-1V299.1h-1V299.1h-1V299.2h-1V299.2h-1V299.1h-1V299.3h-1V299.3h-1V299.2h-1V299.1h-1V299.3h-1V299.2h-1V299.2h-1V299.2h-1V299.2h-1V299.1h-1V299.3h-1V299.2h-1V299.3h-1V299.6h-1V299.9h-1V299.8h-1V300.2h-1V300.3h-1V300.7h-1V301.6h-1V302.2h-1V302.7h-1V302.9h-1V303.5h-1V303.2h-1V303.5h-1V303.1h-1V302.0h-1V302.5h-1V301.8h-1V301.6h-1V302.0h-1V302.1h-1V302.6h-1V302.7h-1V304.2h-1V304.3h-1V304.9h-1V305.0h-1V305.5h-1V305.5h-1V307.5h-1V306.6h-1V307.1h-1V308.9h-1V308.6h-1V308.9h-1V309.5h-1V309.2h-1V310.6h-1V311.5h-1V311.3h-1V311.6h-1V311.8h-1V313.6h-1V312.2h-1V314.3h-1V314.2h-1V314.6h-1V314.5h-1V315.1h-1V314.1h-1V317.0h-1V316.4h-1V316.3h-1V316.0h-1V316.4h-1V315.3h-1V316.2h-1V315.8h-1V316.5h-1V316.1h-1V317.0h-1V315.2h-1V316.0h-1V314.9h-1V318.0h-1V317.9h-1V317.4h-1V314.6h-1V315.2h-1V316.9h-1V316.7h-1V314.7h-1V314.3h-1V315.1h-1V317.1h-1V315.8h-1V317.0h-1V315.0h-1V317.9h-1V314.6h-1V314.9h-1V317.1h-1V316.4h-1V316.6h-1V317.4h-1V316.2h-1V317.0h-1V315.9h-1V315.6h-1V315.2h-1V316.9h-1V314.5h-1V314.6h-1V316.6h-1V316.5h-1V314.5h-1V316.3h-1V314.3h-1V315.3h-1V311.8h-1V311.6h-1V311.4h-1V309.3h-1V310.7h-1V310.5h-1V309.8h-1V309.8h-1V309.7h-1V311.4h-1V310.1h-1V310.5h-1V309.3h-1V309.9h-1V311.2h-1V310.5h-1V309.3h-1V311.3h-1V310.6h-1V309.4h-1V309.1h-1V310.6h-1V311.0h-1V310.7h-1V310.3h-1V308.3h-1V308.5h-1V309.0h-1V307.0h-1V305.3h-1V303.5h-1V301.1h-1V299.9h-1V300.6h-1V301.0h-1V301.4h-1V302.4h-1V303.1h-1V303.0h-1V303.4h-1V303.0h-1V302.5h-1V302.8h-1V302.6h-1V302.9h-1V302.4h-1V302.1h-1V302.6h-1V300.3h-1V299.5h-1V299.7h-1V300.1h-1V300.0h-1V300.5h-1V300.3h-1V300.9h-1V301.1h-1V301.0h-1V301.0h-1V300.9h-1V300.6h-1V300.6h-1V300.4h-1V300.5h-1V300.5h-1V300.8h-1V301.1h-1V301.0h-1V301.3h-1V301.3h-1V301.1h-1V301.5h-1V301.8h-1V302.3h-1V302.5h-1V302.3h-1V302.7h-1V303.2h-1V302.6h-1V303.9h-1V303.4h-1V304.2h-1V304.8h-1V305.6h-1V306.4h-1V307.2h-1V308.2h-1V307.3h-1V307.1h-1V307.3h-1V308.6h-1V308.5h-1V308.9h-1V307.7h-1V307.8h-1V308.8h-1V308.5h-1V307.6h-1V307.7h-1V308.2h-1V308.1h-1V306.9h-1V306.7h-1V308.0h-1V307.3h-1V306.5h-1V307.6h-1V306.3h-1V306.4h-1V306.2h-1V307.1h-1V306.0h-1V306.4h-1V305.5h-1V305.8h-1V305.1h-1V305.6h-1V305.9h-1V305.5h-1V304.6h-1V304.7h-1V305.1h-1V304.7h-1V304.8h-1V303.7h-1V303.8h-1V303.7h-1V303.6h-1V303.0h-1V302.4h-1V302.8h-1V302.5h-1V302.8h-1V302.6h-1V302.0h-1V301.6h-1V302.1h-1V301.9h-1V301.7h-1V302.2h-1V302.4h-1V302.3h-1V302.1h-1V303.0h-1V305.1h-1V305.0h-1V306.3h-1V306.2h-1V306.7h-1V306.9h-1V306.6h-1V306.1h-1V306.3h-1V305.4h-1V305.3h-1V305.6h-1V305.6h-1V306.3h-1V305.6h-1V304.8h-1V305.3h-1V304.8h-1V305.6h-1V305.5h-1V304.7h-1V305.4h-1V305.4h-1V304.4h-1V304.8h-1V305.0h-1V304.5h-1V304.0h-1V304.1h-1V304.4h-1V305.0h-1V303.8h-1V304.1h-1V304.2h-1V304.7h-1V303.9h-1V304.1h-1V303.4h-1V304.2h-1V304.0h-1V304.0h-1V303.5h-1V303.3h-1V303.8h-1V303.6h-1V303.6h-1V303.3h-1V302.7h-1V303.2h-1V302.6h-1V302.9h-1V303.0h-1V302.4h-1V302.3h-1V302.8h-1V302.5h-1V302.3h-1V302.2h-1V302.5h-1V302.1h-1V302.4h-1V302.4h-1V301.8h-1V302.2h-1V301.8h-1V302.0h-1V301.9h-1V301.7h-1V301.6h-1V301.7h-1V301.7h-1V301.5h-1V301.4h-1V301.7h-1V301.5h-1V301.1h-1V301.3h-1V301.1h-1V301.0h-1V301.1h-1V301.0h-1V301.3h-1V301.3h-1V300.9h-1V301.4h-1V301.1h-1V301.2h-1V301.1h-1V300.9h-1V301.0h-1V300.8h-1V300.7h-1V301.3h-1V300.9h-1V301.3h-1V301.2h-1V301.2h-1V301.1h-1V301.0h-1V301.2h-1V300.8h-1V300.9h-1V300.5h-1V300.2h-1V299.7h-1Z" fill="#6464dc" shape-rendering="crispEdges"/></svg>
<svg style="left:0px;top:0px" width="876" height="622" viewBox="0 0 876 622"><path d="M134 432.0V432.0h1V430.4h1V429.5h1V429.2h1V428.1h1V429.4h1V429.9h1V429.9h1V427.5h1V429.7h1V424.0h1V418.0h1V415.4h1V427.3h1V429.9h1V428.5h1V429.0h1V430.2h1V429.4h1V429.4h1V428.5h1V428.5h1V428.6h1V428.9h1V427.7h1V416.5h1V415.4h1V423.5h1V427.0h1V426.9h1V428.3h1V426.8h1V427.5h1V425.8h1V427.8h1V426.5h1V426.0h1V422.3h1V417.3h1V424.7h1V423.9h1V426.0h1V424.8h1V424.0h1V422.8h1V423.9h1V424.0h1V423.7h1V423.8h1V417.3h1V423.8h1V422.9h1V420.0h1V422.6h1V421.9h1V421.6h1V417.8h1V422.6h1V423.5h1V420.2h1V418.2h1V416.0h1V419.9h1V415.5h1V419.8h1V418.9h1V418.7h1V414.0h1V421.5h1V423.1h1V415.0h1V419.3h1V422.2h1V419.6h1V414.4h1V419.1h1V417.0h1V416.6h1V417.2h1V410.9h1V415.4h1V404.7h1V408.2h1V402.7h1V413.7h1V413.2h1V412.9h1V417.5h1V410.1h1V410.2h1V411.0h1V409.4h1V411.1h1V415.4h1V408.5h1V409.2h1V408.6h1V398.8h1V401.8h1V398.0h1V400.2h1V407.0h1V391.2h1V391.3h1V400.0h1V418.8h1V426.2h1V426.0h1V425.5h1V426.8h1V425.9h1V424.2h1V427.3h1V425.2h1V421.1h1V416.3h1V408.3h1V422.7h1V422.1h1V424.6h1V425.7h1V424.5h1V426.0h1V422.9h1V418.6h1V415.2h1V420.9h1V421.0h1V416.3h1V410.9h1V397.9h1V410.4h1V418.7h1V419.8h1V419.5h1V418.4h1V420.8h1V418.9h1V418.5h1V421.0h1V418.4h1V407.8h1V397.3h1V391.9h1V413.5h1V412.1h1V408.9h1V414.2h1V409.5h1V401.4h1V410.9h1V408.7h1V400.5h1V395.3h1V409.8h1V409.4h1V410.7h1V409.1h1V398.6h1V401.1h1V400.7h1V401.7h1V391.9h1V399.2h1V402.2h1V397.2h1V408.6h1V425.5h1V425.8h1V423.5h1V423.9h1V403.1h1V410.4h1V426.9h1V428.1h1V425.3h1V427.7h1V427.5h1V428.3h1V429.4h1V430.2h1V431.1h1V430.3h1V418.7h1V424.5h1V429.5h1V431.4h1V433.2h1V432.3h1V421.7h1V415.2h1V425.2h1V426.6h1V419.6h1V425.4h1V424.7h1V424.6h1V428.2h1V430.8h1V432.0h1V431.2h1V412.4h1V416.3h1V414.6h1V415.9h1V415.5h1V409.9h1V414.3h1V417.9h1V406.5h1V414.1h1V413.6h1V419.7h1V422.1h1V422.9h1V427.0h1V431.2h1V425.9h1V424.0h1V419.6h1V418.4h1V414.7h1V417.5h1V419.7h1V411.5h1V401.7h1V407.8h1V396.9h1V410.9h1V413.3h1V413.8h1V415.8h1V403.1h1V398.7h1V411.3h1V406.6h1V412.3h1V407.9h1V406.2h1V413.5h1V401.4h1V396.9h1V413.4h1V405.2h1V392.0h1V404.1h1V417.3h1V414.0h1V410.2h1V403.5h1V390.0h1V383.6h1V378.0h1V380.6h1V373.0h1V387.8h1V375.2h1V373.0h1V387.2h1V381.9h1V383.7h1V385.6h1V382.5h1V385.6h1V383.5h1V373.0h1V381.6h1V377.3h1V373.0h1V376.2h1V375.1h1V381.2h1V384.1h1V373.0h1V374.0h1V378.2h1V390.9h1V373.0h1V377.8h1V392.6h1V377.3h1V386.1h1V373.0h1V379.7h1V377.7h1V379.7h1V389.3h1V380.7h1V374.1h1V374.7h1V374.0h1V378.2h1V385.2h1V386.6h1V380.9h1V389.7h1V382.7h1V378.2h1V380.1h1V388.5h1V380.7h1V380.5h1V395.3h1V402.7h1V409.2h1V398.1h1V400.5h1V404.8h1V410.8h1V407.5h1V402.3h1V393.5h1V402.9h1V405.8h1V401.6h1V398.6h1V410.6h1V412.1h1V414.7h1V412.4h1V413.2h1V420.5h1V421.9h1V423.4h1V422.2h1V425.9h1V426.6h1V425.5h1V426.2h1V428.5h1V428.8h1V427.9h1V426.0h1V424.0h1V427.5h1V425.8h1V422.6h1V415.4h1V420.4h1V425.3h1V428.6h1V429.1h1V429.8h1V430.8h1V431.1h1V431.9h1V432.6h1V432.8h1V433.5h1V433.8h1V433.8h1V433.1h1V424.7h1V429.2h1V433.8h1V434.0h1V420.6h1V429.4h1V434.1h1V434.3h1V434.5h1V434.5h1V434.5h1V434.5h1V434.2h1V430.0h1V425.7h1V428.5h1V433.2h1V433.4h1V426.7h1V430.9h1V433.4h1V432.9h1V431.8h1V431.4h1V431.8h1V430.8h1V430.7h1V431.4h1V431.0h1V430.4h1V423.6h1V428.0h1V430.4h1V431.9h1V422.6h1V429.3h1V432.6h1V432.8h1V431.6h1V430.7h1V431.7h1V430.6h1V431.4h1V430.4h1V429.8h1V428.3h1V428.5h1V428.6h1V422.6h1V425.3h1V424.6h1V420.2h1V412.3h1V420.9h1V428.2h1V433.6h1V432.3h1V431.1h1V431.6h1V432.4h1V431.8h1V431.7h1V432.4h1V420.6h1V428.1h1V432.4h1V428.5h1V423.6h1V430.5h1V430.8h1V428.3h1V423.6h1V432.5h1V433.1h1V432.4h1V433.1h1V433.4h1V430.1h1V426.1h1V425.4h1V421.7h1V423.2h1V423.1h1V426.0h1V424.1h1V425.8h1V416.5h1V422.3h1V422.1h1V425.2h1V424.5h1V424.8h1V423.4h1V425.5h1V425.6h1V424.5h1V421.3h1V422.5h1V423.7h1V424.5h1V424.1h1V422.5h1V424.4h1V425.6h1V425.1h1V423.7h1V422.6h1V423.8h1V425.5h1V425.0h1V421.5h1V422.7h1V423.4h1V421.7h1V421.9h1V419.5h1V417.3h1V416.1h1V418.6h1V418.9h1V418.7h1V422.0h1V421.4h1V418.3h1V422.5h1V416.2h1V423.0h1V423.9h1V423.2h1V418.8h1V414.3h1V417.5h1V417.5h1V415.6h1V405.4h1V411.2h1V417.2h1V417.5h1V414.9h1V414.6h1V413.9h1V403.4h1V406.1h1V397.1h1V397.6h1V407.1h1V413.2h1V415.5h1V419.7h1V419.2h1V419.0h1V417.7h1V407.3h1V414.8h1V418.9h1V423.1h1V423.4h1V422.1h1V420.3h1V416.2h1V413.8h1V411.4h1V416.5h1V417.1h1V419.4h1V418.4h1V416.9h1V405.1h1V408.4h1V414.5h1V415.0h1V410.2h1V415.4h1V415.1h1V410.2h1V402.9h1V407.4h1V403.7h1V398.4h1V403.8h1V403.0h1V409.3h1V413.0h1V407.7h1V412.5h1V407.9h1V406.5h1V414.5h1V412.4h1V407.7h1V399.3h1V411.0h1V418.3h1V419.1h1V415.6h1V414.9h1V416.0h1V416.5h1V423.3h1V422.5h1V426.9h1V429.6h1V432.8h1V433.5h1V434.2h1V431.2h1V427.0h1V422.6h1V423.2h1V420.2h1V420.7h1V421.6h1V421.1h1V422.0h1V422.7h1V422.9h1V422.7h1V421.0h1V420.2h1V418.3h1V421.8h1V422.6h1V426.2h1V427.0h1V425.4h1V422.6h1V425.0h1V425.9h1V421.3h1V421.1h1V419.7h1V420.2h1V422.0h1V419.7h1V421.2h1V423.1h1V429.1h1V427.2h1V422.5h1V418.3h1V418.7h1V420.8h1V418.3h1V423.2h1V427.1h1V426.9h1V426.8h1V425.9h1V427.6h1V424.3h1V428.5h1V427.9h1V424.4h1V426.6h1V428.4h1V431.3h1V432.3h1V431.2h1V428.6h1V424.2h1V423.8h1V423.7h1V426.5h1V426.7h1V428.9h1V429.2h1V430.9h1V431.4h1V427.7h1V427.1h1V427.8h1V426.4h1V425.6h1V428.4h1V430.8h1V431.2h1V430.7h1V432.3h1V433.3h1V433.0h1V433.2h1V433.4h1V433.8h1V433.9h1V433.7h1V434.0h1V434.1h1V434.2h1V434.4h1V434.5h1V434.6h1V434.8h1V435.0h1V435.1h1V435.2h1V435.2h1V435.2h1V435.2h1V435.2h1V435.2h1V435.2h1V435.2h1V435.2h1V435.2h1V435.2h1V435.2h1V435.2h1V435.2h1V435.3h1V435.3h1V426.6h1V418.5h1V423.4h1V426.3h1V427.2h1V427.0h1V423.9h1V426.0h1V423.3h1V425.2h1V423.4h1V423.0h1V424.4h1V427.0h1V426.2h1V427.7h1V427.1h1V428.5h1V430.1h1V428.6h1V427.7h1V421.6h1V421.9h1V427.4h1V427.0h1V426.5h1V428.4h1V435.4h1V435.4h1V435.4h1V435.4h1V435.4h1V435.4h1V435.4h1V435.4h1V435.4h1V435.4h1V435.4h1V435.4h1V435.4h1V436.6h-1V436.6h-1V436.6h-1V436.6h-1V436.6h-1V436.6h-1V436.6h-1V436.6h-1V436.6h-1V436.6h-1V436.6h-1V436.6h-1V436.6h-1V441.4h-1V445.3h-1V444.4h-1V443.9h-1V449.2h-1V454.5h-1V443.7h-1V442.9h-1V442.6h-1V443.8h-1V443.2h-1V451.4h-1V444.3h-1V444.7h-1V446.0h-1V453.5h-1V445.3h-1V446.3h-1V445.8h-1V453.5h-1V446.5h-1V446.7h-1V443.2h-1V444.6h-1V446.2h-1V461.8h-1V444.7h-1V436.7h-1V436.7h-1V436.8h-1V436.8h-1V436.8h-1V436.8h-1V436.8h-1V436.8h-1V436.8h-1V436.8h-1V436.8h-1V436.8h-1V436.8h-1V436.8h-1V436.8h-1V436.8h-1V436.9h-1V437.0h-1V437.2h-1V437.4h-1V437.5h-1V437.6h-1V437.8h-1V437.9h-1V438.0h-1V437.8h-1V438.1h-1V437.9h-1V438.3h-1V438.6h-1V438.7h-1V438.3h-1V439.5h-1V439.3h-1V440.1h-1V440.8h-1V442.3h-1V444.0h-1V445.5h-1V443.4h-1V444.9h-1V443.5h-1V439.8h-1V440.9h-1V441.4h-1V444.2h-1V445.1h-1V445.5h-1V448.7h-1V447.6h-1V445.6h-1V443.9h-1V440.5h-1V439.6h-1V439.9h-1V442.5h-1V444.4h-1V444.9h-1V445.6h-1V443.2h-1V443.5h-1V444.7h-1V444.5h-1V443.7h-1V442.7h-1V444.7h-1V446.7h-1V451.9h-1V450.9h-1V451.2h-1V451.9h-1V450.8h-1V444.6h-1V444.4h-1V446.0h-1V448.4h-1V450.3h-1V448.5h-1V452.3h-1V450.6h-1V448.7h-1V447.6h-1V447.5h-1V445.7h-1V445.9h-1V448.2h-1V446.0h-1V448.0h-1V451.4h-1V449.8h-1V451.9h-1V452.9h-1V449.5h-1V446.7h-1V446.3h-1V450.3h-1V448.2h-1V451.3h-1V447.1h-1V448.5h-1V451.3h-1V449.9h-1V447.6h-1V442.5h-1V440.1h-1V437.8h-1V438.9h-1V439.6h-1V441.4h-1V445.0h-1V451.3h-1V450.3h-1V454.4h-1V451.4h-1V453.8h-1V453.9h-1V459.9h-1V452.2h-1V463.6h-1V462.6h-1V457.1h-1V465.3h-1V458.0h-1V462.5h-1V460.5h-1V462.7h-1V464.8h-1V462.5h-1V466.2h-1V464.8h-1V467.1h-1V468.5h-1V468.5h-1V463.3h-1V463.9h-1V463.1h-1V464.3h-1V458.4h-1V459.0h-1V460.0h-1V454.3h-1V462.3h-1V459.4h-1V455.0h-1V452.9h-1V453.6h-1V451.5h-1V454.7h-1V456.3h-1V457.2h-1V453.8h-1V448.6h-1V450.4h-1V454.3h-1V451.7h-1V448.0h-1V458.6h-1V461.9h-1V449.6h-1V449.1h-1V450.2h-1V452.7h-1V454.9h-1V457.2h-1V459.4h-1V467.2h-1V469.4h-1V463.1h-1V463.0h-1V458.3h-1V454.6h-1V453.9h-1V452.0h-1V454.7h-1V459.9h-1V462.8h-1V455.0h-1V454.4h-1V455.3h-1V456.9h-1V451.2h-1V447.6h-1V450.4h-1V447.7h-1V449.5h-1V451.5h-1V448.4h-1V447.8h-1V449.4h-1V449.9h-1V450.5h-1V450.2h-1V453.5h-1V450.5h-1V448.8h-1V448.9h-1V448.5h-1V448.0h-1V447.6h-1V448.7h-1V448.0h-1V445.5h-1V447.3h-1V445.7h-1V448.0h-1V446.9h-1V448.2h-1V446.5h-1V448.5h-1V446.3h-1V448.3h-1V445.7h-1V451.7h-1V448.5h-1V445.1h-1V446.0h-1V445.8h-1V445.0h-1V446.4h-1V449.7h-1V447.0h-1V445.8h-1V450.5h-1V453.5h-1V445.4h-1V445.2h-1V447.4h-1V445.6h-1V446.3h-1V446.8h-1V444.1h-1V446.3h-1V444.4h-1V438.9h-1V439.9h-1V439.2h-1V438.5h-1V439.9h-1V447.1h-1V442.9h-1V441.3h-1V441.1h-1V447.1h-1V442.3h-1V439.7h-1V447.1h-1V449.9h-1V439.2h-1V439.3h-1V439.3h-1V440.0h-1V440.8h-1V440.1h-1V438.6h-1V438.4h-1V443.8h-1V454.6h-1V457.3h-1V450.5h-1V446.6h-1V448.2h-1V448.9h-1V443.3h-1V443.4h-1V442.1h-1V442.4h-1V440.1h-1V441.2h-1V440.6h-1V441.0h-1V440.6h-1V440.3h-1V439.1h-1V439.1h-1V442.1h-1V448.1h-1V439.2h-1V439.8h-1V442.3h-1V447.1h-1V440.3h-1V440.7h-1V441.2h-1V440.9h-1V441.3h-1V439.9h-1V439.8h-1V439.4h-1V438.4h-1V439.6h-1V441.5h-1V444.3h-1V438.1h-1V438.3h-1V441.5h-1V445.3h-1V441.2h-1V437.8h-1V437.5h-1V437.5h-1V437.5h-1V437.5h-1V437.7h-1V437.9h-1V443.8h-1V449.9h-1V438.1h-1V438.0h-1V441.7h-1V446.2h-1V438.7h-1V438.3h-1V438.3h-1V438.6h-1V438.7h-1V438.7h-1V439.4h-1V440.7h-1V441.3h-1V440.4h-1V441.7h-1V444.3h-1V444.0h-1V449.9h-1V454.5h-1V450.8h-1V446.5h-1V445.0h-1V445.5h-1V444.1h-1V444.2h-1V441.6h-1V442.1h-1V446.4h-1V445.7h-1V444.1h-1V445.0h-1V445.9h-1V448.7h-1V450.8h-1V454.6h-1V454.2h-1V458.7h-1V458.9h-1V455.0h-1V463.1h-1V462.2h-1V468.1h-1V464.7h-1V461.5h-1V472.3h-1V471.7h-1V461.8h-1V462.4h-1V462.8h-1V471.8h-1V465.5h-1V466.6h-1V465.6h-1V481.8h-1V483.3h-1V487.7h-1V482.9h-1V485.4h-1V482.1h-1V491.2h-1V482.3h-1V480.2h-1V483.6h-1V482.6h-1V478.2h-1V492.7h-1V484.4h-1V484.1h-1V477.0h-1V484.5h-1V483.5h-1V486.2h-1V488.1h-1V495.3h-1V493.3h-1V482.7h-1V486.3h-1V490.6h-1V492.9h-1V479.6h-1V489.7h-1V488.3h-1V489.4h-1V491.4h-1V477.9h-1V485.8h-1V482.4h-1V487.3h-1V487.4h-1V491.6h-1V485.0h-1V486.9h-1V485.5h-1V487.9h-1V490.4h-1V489.9h-1V477.6h-1V485.1h-1V492.0h-1V488.8h-1V479.4h-1V490.0h-1V487.3h-1V480.2h-1V482.7h-1V477.5h-1V464.1h-1V460.4h-1V454.0h-1V457.7h-1V474.5h-1V473.7h-1V469.2h-1V460.7h-1V467.6h-1V467.6h-1V455.6h-1V466.0h-1V462.3h-1V462.3h-1V455.0h-1V457.8h-1V471.5h-1V464.7h-1V463.1h-1V458.7h-1V458.4h-1V456.5h-1V471.2h-1V458.8h-1V460.4h-1V458.1h-1V454.3h-1V456.9h-1V452.1h-1V449.8h-1V451.4h-1V446.3h-1V445.1h-1V440.4h-1V444.3h-1V448.4h-1V450.7h-1V454.0h-1V454.1h-1V462.6h-1V456.4h-1V457.7h-1V455.3h-1V461.0h-1V456.2h-1V463.0h-1V456.8h-1V455.3h-1V458.4h-1V440.4h-1V439.1h-1V442.3h-1V444.4h-1V445.2h-1V444.0h-1V447.5h-1V451.2h-1V444.1h-1V446.4h-1V454.7h-1V448.3h-1V439.4h-1V439.1h-1V439.8h-1V441.3h-1V446.5h-1V451.6h-1V441.2h-1V442.3h-1V441.6h-1V441.6h-1V441.5h-1V442.1h-1V443.1h-1V442.6h-1V443.8h-1V445.4h-1V454.4h-1V465.6h-1V447.0h-1V446.9h-1V446.1h-1V448.0h-1V457.7h-1V472.0h-1V472.3h-1V462.0h-1V475.7h-1V474.6h-1V473.0h-1V462.7h-1V468.7h-1V473.4h-1V458.5h-1V460.4h-1V462.3h-1V472.6h-1V466.5h-1V461.4h-1V458.1h-1V469.1h-1V461.8h-1V457.4h-1V464.2h-1V458.0h-1V455.9h-1V475.7h-1V469.5h-1V461.8h-1V454.6h-1V451.8h-1V452.2h-1V450.5h-1V448.8h-1V451.4h-1V448.6h-1V448.3h-1V451.9h-1V457.5h-1V470.3h-1V461.5h-1V455.1h-1V450.3h-1V448.7h-1V457.2h-1V455.3h-1V449.0h-1V446.6h-1V444.6h-1V447.5h-1V444.5h-1V444.8h-1V446.8h-1V457.8h-1V457.6h-1V449.3h-1V444.4h-1V445.3h-1V446.2h-1V443.9h-1V443.3h-1V447.0h-1V445.8h-1V446.1h-1V453.3h-1V468.8h-1V474.1h-1V476.3h-1V472.9h-1V462.9h-1V467.9h-1V468.1h-1V468.1h-1V466.3h-1V467.4h-1V468.5h-1V457.8h-1V454.1h-1V457.1h-1V462.4h-1V462.2h-1V460.5h-1V458.4h-1V460.0h-1V457.6h-1V455.1h-1V459.5h-1V461.7h-1V458.0h-1V455.9h-1V462.7h-1V455.8h-1V455.3h-1V455.6h-1V452.1h-1V456.5h-1V454.4h-1V449.9h-1V451.2h-1V451.6h-1V451.5h-1V448.7h-1V453.1h-1V454.2h-1V453.1h-1V454.9h-1V450.8h-1V450.1h-1V456.0h-1V456.0h-1V451.3h-1V449.2h-1V450.8h-1V452.8h-1V449.2h-1V447.6h-1V449.2h-1V449.9h-1V448.5h-1V447.8h-1V451.6h-1V448.8h-1V444.8h-1V447.8h-1V448.4h-1V446.1h-1V449.4h-1V447.3h-1V446.5h-1V446.5h-1V445.4h-1V451.3h-1V446.5h-1V443.7h-1V444.3h-1V444.0h-1V444.6h-1V445.7h-1V444.4h-1V445.2h-1V444.5h-1V443.5h-1V445.5h-1V454.5h-1V453.7h-1V441.9h-1V442.0h-1V442.5h-1V442.7h-1V443.2h-1V443.1h-1V441.5h-1V442.7h-1V442.6h-1V442.2h-1V443.3h-1V443.7h-1V454.5h-1V456.7h-1V447.2h-1V442.5h-1V442.6h-1V442.0h-1V441.2h-1V442.9h-1V443.0h-1V442.6h-1V442.5h-1V440.5h-1V440.5h-1Z" fill="#3232c8" shape-rendering="crispEdges"/><path d="M134 434.4V434.4h1V434.2h1V433.7h1V433.7h1V433.0h1V433.2h1V433.2h1V433.4h1V433.5h1V433.4h1V433.4h1V433.4h1V433.2h1V433.3h1V433.1h1V433.4h1V433.3h1V433.5h1V433.4h1V433.0h1V433.1h1V433.2h1V433.4h1V433.3h1V433.2h1V433.4h1V433.3h1V433.1h1V432.9h1V432.7h1V432.8h1V433.0h1V433.0h1V433.0h1V432.9h1V432.9h1V432.5h1V432.8h1V432.9h1V432.9h1V432.2h1V432.3h1V432.2h1V432.6h1V432.2h1V432.1h1V431.7h1V431.8h1V431.9h1V432.3h1V431.9h1V432.1h1V431.6h1V431.5h1V431.7h1V431.3h1V431.3h1V431.7h1V431.5h1V431.5h1V431.2h1V431.6h1V430.8h1V430.5h1V430.6h1V431.1h1V431.1h1V431.0h1V430.1h1V430.5h1V430.6h1V430.0h1V430.0h1V430.7h1V430.1h1V430.1h1V430.4h1V429.5h1V430.0h1V430.4h1V430.3h1V429.2h1V429.5h1V430.0h1V430.1h1V429.3h1V428.9h1V429.9h1V428.8h1V429.3h1V429.1h1V429.3h1V429.4h1V428.6h1V428.8h1V429.2h1V428.1h1V429.2h1V428.5h1V428.8h1V429.0h1V428.1h1V428.6h1V429.3h1V430.4h1V430.7h1V431.9h1V432.6h1V432.1h1V432.2h1V432.3h1V432.5h1V432.6h1V432.5h1V432.0h1V432.6h1V432.2h1V432.1h1V432.1h1V431.6h1V431.9h1V431.0h1V431.5h1V430.5h1V430.2h1V430.5h1V430.4h1V429.9h1V430.1h1V430.0h1V429.7h1V429.9h1V428.8h1V428.5h1V428.3h1V429.2h1V428.7h1V429.0h1V428.3h1V427.7h1V427.9h1V428.1h1V428.6h1V427.3h1V427.5h1V427.7h1V427.8h1V426.9h1V427.8h1V426.7h1V428.0h1V427.9h1V426.2h1V426.3h1V426.6h1V427.3h1V427.2h1V426.2h1V427.9h1V427.0h1V427.9h1V426.6h1V427.5h1V427.0h1V428.3h1V428.4h1V429.9h1V430.3h1V431.0h1V431.1h1V431.2h1V431.6h1V432.1h1V432.2h1V432.2h1V432.1h1V432.3h1V432.8h1V432.9h1V432.8h1V433.2h1V433.2h1V433.6h1V433.6h1V433.7h1V433.5h1V433.5h1V433.8h1V433.7h1V433.7h1V433.2h1V433.4h1V433.6h1V433.4h1V433.9h1V433.7h1V434.0h1V434.4h1V434.2h1V434.5h1V433.7h1V431.9h1V431.5h1V431.8h1V431.5h1V431.8h1V432.1h1V431.3h1V431.3h1V431.6h1V431.8h1V431.7h1V432.4h1V432.8h1V432.9h1V433.7h1V434.4h1V433.2h1V432.0h1V430.3h1V429.3h1V429.1h1V428.4h1V427.4h1V427.6h1V428.1h1V426.5h1V427.6h1V427.2h1V427.1h1V427.8h1V428.0h1V428.0h1V427.7h1V426.5h1V426.6h1V426.2h1V427.0h1V426.8h1V427.9h1V427.2h1V426.7h1V426.6h1V426.9h1V426.1h1V427.7h1V427.0h1V427.3h1V426.6h1V422.8h1V419.2h1V420.8h1V420.2h1V421.6h1V420.9h1V419.7h1V419.1h1V419.6h1V418.1h1V419.8h1V418.8h1V418.6h1V419.8h1V419.0h1V419.7h1V420.4h1V419.6h1V418.8h1V421.0h1V417.9h1V419.1h1V421.1h1V418.3h1V419.6h1V419.7h1V419.5h1V418.8h1V419.8h1V418.4h1V418.2h1V420.4h1V418.3h1V419.4h1V421.0h1V419.6h1V418.8h1V420.8h1V420.2h1V419.9h1V420.2h1V417.9h1V420.4h1V419.2h1V420.3h1V420.9h1V420.3h1V420.6h1V420.3h1V421.0h1V418.7h1V418.8h1V421.1h1V421.7h1V423.5h1V422.3h1V422.1h1V422.9h1V423.8h1V424.2h1V425.2h1V424.3h1V425.0h1V425.9h1V426.2h1V427.2h1V425.9h1V427.8h1V427.0h1V428.6h1V429.3h1V429.0h1V429.7h1V429.7h1V430.2h1V431.1h1V431.5h1V431.3h1V431.6h1V432.2h1V432.8h1V432.9h1V432.3h1V431.7h1V431.8h1V431.4h1V431.7h1V431.5h1V431.9h1V431.6h1V432.5h1V433.1h1V433.5h1V433.9h1V434.0h1V434.2h1V434.3h1V434.6h1V434.7h1V434.9h1V434.8h1V434.8h1V434.9h1V435.0h1V434.9h1V434.9h1V434.9h1V435.0h1V434.9h1V434.9h1V434.9h1V434.9h1V434.9h1V435.0h1V435.0h1V435.0h1V434.9h1V434.9h1V434.8h1V434.9h1V434.7h1V434.7h1V434.5h1V434.6h1V434.6h1V434.6h1V434.4h1V434.4h1V434.2h1V434.4h1V434.1h1V434.3h1V434.1h1V434.2h1V434.4h1V434.3h1V434.2h1V434.4h1V434.4h1V434.3h1V434.3h1V434.3h1V434.3h1V434.3h1V434.2h1V434.2h1V434.0h1V433.6h1V433.5h1V433.6h1V433.3h1V432.9h1V433.0h1V432.6h1V433.2h1V433.0h1V433.4h1V434.2h1V435.0h1V434.8h1V434.6h1V434.6h1V434.7h1V434.7h1V434.5h1V434.6h1V434.6h1V434.6h1V434.6h1V434.6h1V434.8h1V434.6h1V434.6h1V434.7h1V434.7h1V434.8h1V434.6h1V434.6h1V434.0h1V433.6h1V433.6h1V432.8h1V432.6h1V432.1h1V431.9h1V431.7h1V431.5h1V432.1h1V432.2h1V432.1h1V432.3h1V432.2h1V432.0h1V432.1h1V431.9h1V431.5h1V431.8h1V432.3h1V432.2h1V431.9h1V431.6h1V431.9h1V432.1h1V432.1h1V431.4h1V431.8h1V432.1h1V432.0h1V431.8h1V431.3h1V431.9h1V431.3h1V430.9h1V430.7h1V431.4h1V430.4h1V430.5h1V430.7h1V430.2h1V431.0h1V430.8h1V431.1h1V430.9h1V430.1h1V430.6h1V430.8h1V430.6h1V430.4h1V431.0h1V430.4h1V430.3h1V430.5h1V429.7h1V429.8h1V429.5h1V428.4h1V429.4h1V428.9h1V427.8h1V428.0h1V428.7h1V428.3h1V428.4h1V428.6h1V428.2h1V428.1h1V427.5h1V427.1h1V427.2h1V427.7h1V428.4h1V429.7h1V429.8h1V429.5h1V429.6h1V429.9h1V431.0h1V431.0h1V430.2h1V430.9h1V430.8h1V430.2h1V430.1h1V430.2h1V430.5h1V429.5h1V429.3h1V428.9h1V428.9h1V428.4h1V429.3h1V428.9h1V428.9h1V429.2h1V429.0h1V428.3h1V428.5h1V427.5h1V428.7h1V427.7h1V427.2h1V428.2h1V427.1h1V428.2h1V427.2h1V427.2h1V428.3h1V428.7h1V428.1h1V427.9h1V428.4h1V428.2h1V429.4h1V429.8h1V430.1h1V429.8h1V429.7h1V429.9h1V430.4h1V430.4h1V431.0h1V431.7h1V432.9h1V433.1h1V434.0h1V434.3h1V434.6h1V435.0h1V434.5h1V433.6h1V432.8h1V432.7h1V431.8h1V431.4h1V431.4h1V431.5h1V431.8h1V431.7h1V431.1h1V431.1h1V430.6h1V431.1h1V430.3h1V431.0h1V432.0h1V432.3h1V432.6h1V432.3h1V432.4h1V431.6h1V431.7h1V431.4h1V431.6h1V431.2h1V431.1h1V431.5h1V430.7h1V431.3h1V432.1h1V432.2h1V432.1h1V431.6h1V431.1h1V430.9h1V430.8h1V431.4h1V432.2h1V432.2h1V432.9h1V432.9h1V433.0h1V432.6h1V432.6h1V433.0h1V432.5h1V432.7h1V433.3h1V434.0h1V434.2h1V434.6h1V434.5h1V433.7h1V433.2h1V433.0h1V432.5h1V432.7h1V432.9h1V433.3h1V433.8h1V434.3h1V434.5h1V433.9h1V433.3h1V433.1h1V433.2h1V433.3h1V433.6h1V433.8h1V434.2h1V434.4h1V434.6h1V434.8h1V434.9h1V435.0h1V434.9h1V435.0h1V435.1h1V435.1h1V435.1h1V435.1h1V435.3h1V435.3h1V435.2h1V435.3h1V435.4h1V435.5h1V435.5h1V435.5h1V435.6h1V435.6h1V435.5h1V435.5h1V435.6h1V435.6h1V435.5h1V435.6h1V435.5h1V435.5h1V435.6h1V435.6h1V435.5h1V435.5h1V435.5h1V434.8h1V431.5h1V432.2h1V432.0h1V432.4h1V432.4h1V431.8h1V432.4h1V431.8h1V431.8h1V431.9h1V431.7h1V432.0h1V431.7h1V431.8h1V432.3h1V433.1h1V433.5h1V433.2h1V433.3h1V433.1h1V431.8h1V431.9h1V431.5h1V432.1h1V433.0h1V433.5h1V435.5h1V435.5h1V435.6h1V435.5h1V435.6h1V435.5h1V435.5h1V435.6h1V435.5h1V435.6h1V435.6h1V435.5h1V435.6h1V436.4h-1V436.5h-1V436.4h-1V436.4h-1V436.5h-1V436.4h-1V436.5h-1V436.5h-1V436.4h-1V436.5h-1V436.4h-1V436.5h-1V436.5h-1V438.5h-1V439.0h-1V439.9h-1V440.5h-1V440.1h-1V440.2h-1V438.9h-1V438.7h-1V438.8h-1V438.5h-1V438.9h-1V439.7h-1V440.2h-1V440.3h-1V440.0h-1V440.3h-1V440.1h-1V440.2h-1V440.2h-1V439.6h-1V440.2h-1V439.6h-1V439.6h-1V440.0h-1V439.8h-1V440.5h-1V437.2h-1V436.5h-1V436.5h-1V436.5h-1V436.4h-1V436.4h-1V436.5h-1V436.5h-1V436.4h-1V436.5h-1V436.4h-1V436.4h-1V436.5h-1V436.5h-1V436.4h-1V436.4h-1V436.5h-1V436.5h-1V436.5h-1V436.6h-1V436.7h-1V436.8h-1V436.7h-1V436.7h-1V436.9h-1V436.9h-1V436.9h-1V436.9h-1V437.0h-1V437.1h-1V437.0h-1V437.1h-1V437.2h-1V437.4h-1V437.6h-1V437.8h-1V438.2h-1V438.4h-1V438.7h-1V438.8h-1V438.9h-1V438.7h-1V438.1h-1V437.5h-1V437.7h-1V438.2h-1V438.7h-1V439.1h-1V439.3h-1V439.5h-1V439.0h-1V438.8h-1V438.3h-1V437.5h-1V437.4h-1V437.8h-1V438.0h-1V438.7h-1V439.3h-1V439.5h-1V439.0h-1V439.4h-1V439.4h-1V439.0h-1V439.1h-1V439.1h-1V439.8h-1V439.8h-1V440.6h-1V441.2h-1V441.1h-1V440.9h-1V440.4h-1V439.9h-1V439.8h-1V439.9h-1V440.7h-1V441.3h-1V440.5h-1V440.9h-1V440.8h-1V440.4h-1V440.6h-1V440.3h-1V440.4h-1V439.6h-1V439.7h-1V439.4h-1V439.7h-1V440.0h-1V441.0h-1V441.7h-1V440.9h-1V441.4h-1V440.9h-1V440.9h-1V440.3h-1V440.2h-1V440.5h-1V440.6h-1V440.6h-1V440.2h-1V439.3h-1V439.2h-1V438.4h-1V437.5h-1V437.0h-1V437.4h-1V437.7h-1V438.0h-1V438.9h-1V439.1h-1V440.3h-1V441.0h-1V441.6h-1V441.6h-1V442.1h-1V442.3h-1V442.2h-1V441.9h-1V442.2h-1V442.6h-1V443.8h-1V443.6h-1V444.1h-1V443.9h-1V443.3h-1V443.7h-1V444.8h-1V444.8h-1V443.8h-1V444.9h-1V443.8h-1V444.8h-1V444.3h-1V443.3h-1V444.5h-1V443.5h-1V443.7h-1V443.0h-1V442.8h-1V443.1h-1V443.1h-1V442.7h-1V443.6h-1V443.1h-1V443.1h-1V442.7h-1V442.5h-1V441.5h-1V441.8h-1V441.9h-1V441.8h-1V441.2h-1V441.1h-1V441.8h-1V441.0h-1V441.0h-1V442.1h-1V442.4h-1V442.5h-1V442.2h-1V442.3h-1V443.6h-1V444.3h-1V444.8h-1V444.9h-1V444.5h-1V443.9h-1V443.8h-1V443.4h-1V443.6h-1V443.7h-1V443.3h-1V444.0h-1V444.2h-1V443.1h-1V442.6h-1V443.6h-1V442.5h-1V442.2h-1V442.3h-1V441.5h-1V441.7h-1V441.6h-1V441.0h-1V441.6h-1V441.4h-1V441.2h-1V441.4h-1V441.9h-1V441.1h-1V440.9h-1V441.2h-1V441.0h-1V441.8h-1V441.3h-1V441.5h-1V441.6h-1V440.6h-1V441.3h-1V441.1h-1V440.7h-1V440.1h-1V440.7h-1V440.2h-1V440.0h-1V439.9h-1V440.2h-1V440.6h-1V439.9h-1V439.9h-1V440.1h-1V440.4h-1V440.1h-1V439.8h-1V439.7h-1V440.2h-1V440.5h-1V440.1h-1V439.9h-1V440.0h-1V439.8h-1V439.7h-1V439.9h-1V439.8h-1V439.9h-1V440.5h-1V440.3h-1V440.1h-1V439.9h-1V439.4h-1V439.2h-1V438.4h-1V438.4h-1V438.0h-1V437.4h-1V437.4h-1V437.2h-1V437.3h-1V437.3h-1V437.4h-1V437.4h-1V437.2h-1V437.4h-1V437.4h-1V437.4h-1V437.4h-1V437.4h-1V437.5h-1V437.3h-1V437.3h-1V437.4h-1V437.4h-1V437.2h-1V437.0h-1V437.8h-1V438.6h-1V439.0h-1V438.8h-1V439.4h-1V439.0h-1V439.1h-1V438.7h-1V438.4h-1V438.5h-1V438.4h-1V438.0h-1V437.8h-1V437.8h-1V437.7h-1V437.7h-1V437.7h-1V437.7h-1V437.7h-1V437.6h-1V437.6h-1V437.8h-1V437.7h-1V437.6h-1V437.8h-1V437.9h-1V437.7h-1V437.9h-1V437.6h-1V437.8h-1V437.6h-1V437.6h-1V437.4h-1V437.4h-1V437.4h-1V437.5h-1V437.3h-1V437.3h-1V437.1h-1V437.2h-1V437.1h-1V437.1h-1V437.0h-1V437.0h-1V437.0h-1V437.1h-1V437.1h-1V437.1h-1V437.1h-1V437.1h-1V437.0h-1V437.1h-1V437.1h-1V437.1h-1V437.0h-1V437.1h-1V437.2h-1V437.2h-1V437.1h-1V437.3h-1V437.4h-1V437.7h-1V437.8h-1V438.0h-1V438.1h-1V438.5h-1V438.9h-1V439.5h-1V440.4h-1V440.1h-1V440.5h-1V440.3h-1V440.6h-1V440.2h-1V440.3h-1V439.7h-1V439.1h-1V439.2h-1V439.8h-1V440.4h-1V440.7h-1V440.5h-1V440.9h-1V441.8h-1V442.3h-1V442.3h-1V443.0h-1V442.7h-1V443.4h-1V445.0h-1V444.2h-1V446.1h-1V444.8h-1V445.8h-1V446.1h-1V447.0h-1V447.7h-1V446.8h-1V447.8h-1V448.2h-1V449.1h-1V449.9h-1V449.7h-1V448.5h-1V450.3h-1V450.9h-1V453.2h-1V453.3h-1V451.0h-1V451.7h-1V451.4h-1V451.7h-1V451.1h-1V451.7h-1V452.8h-1V451.6h-1V454.1h-1V451.8h-1V452.1h-1V451.8h-1V451.2h-1V453.2h-1V452.4h-1V451.0h-1V452.6h-1V453.7h-1V451.6h-1V453.8h-1V453.6h-1V452.2h-1V453.2h-1V452.5h-1V452.3h-1V452.4h-1V453.7h-1V450.9h-1V452.9h-1V454.1h-1V451.0h-1V453.2h-1V452.4h-1V451.6h-1V452.3h-1V453.0h-1V452.2h-1V453.4h-1V453.2h-1V452.2h-1V453.9h-1V452.4h-1V452.9h-1V452.3h-1V451.1h-1V450.4h-1V451.8h-1V451.2h-1V452.8h-1V449.2h-1V445.4h-1V444.7h-1V445.0h-1V444.3h-1V445.9h-1V445.1h-1V445.4h-1V445.3h-1V444.8h-1V444.1h-1V445.2h-1V445.0h-1V445.8h-1V445.4h-1V445.5h-1V444.3h-1V444.0h-1V444.0h-1V444.2h-1V444.9h-1V444.8h-1V444.4h-1V445.5h-1V443.9h-1V444.4h-1V444.6h-1V443.6h-1V442.9h-1V442.7h-1V441.7h-1V440.0h-1V438.8h-1V437.6h-1V438.3h-1V439.1h-1V439.2h-1V439.6h-1V440.3h-1V440.2h-1V440.4h-1V440.7h-1V440.7h-1V439.9h-1V440.2h-1V440.5h-1V440.2h-1V440.5h-1V440.1h-1V438.3h-1V437.5h-1V437.8h-1V437.6h-1V438.0h-1V438.3h-1V438.1h-1V438.6h-1V438.4h-1V438.6h-1V438.8h-1V438.3h-1V438.3h-1V438.2h-1V438.5h-1V438.5h-1V438.3h-1V438.4h-1V438.4h-1V438.8h-1V438.8h-1V439.2h-1V439.1h-1V439.2h-1V439.7h-1V439.9h-1V439.8h-1V439.8h-1V439.9h-1V440.4h-1V440.8h-1V440.9h-1V441.0h-1V441.7h-1V442.1h-1V443.6h-1V443.7h-1V445.0h-1V444.5h-1V445.4h-1V444.1h-1V445.0h-1V444.1h-1V445.8h-1V444.8h-1V444.7h-1V445.4h-1V445.7h-1V445.8h-1V444.1h-1V444.0h-1V445.3h-1V444.2h-1V445.1h-1V444.2h-1V444.3h-1V444.5h-1V444.7h-1V443.4h-1V443.9h-1V444.1h-1V444.3h-1V443.7h-1V443.0h-1V443.3h-1V442.8h-1V443.7h-1V443.5h-1V443.2h-1V442.1h-1V442.3h-1V442.0h-1V441.9h-1V442.1h-1V441.6h-1V441.5h-1V441.8h-1V441.5h-1V440.5h-1V441.0h-1V440.1h-1V440.4h-1V439.9h-1V439.9h-1V439.8h-1V439.4h-1V440.0h-1V439.5h-1V439.4h-1V439.5h-1V439.7h-1V439.8h-1V439.9h-1V439.4h-1V440.1h-1V441.3h-1V441.6h-1V442.7h-1V443.4h-1V443.9h-1V443.0h-1V443.2h-1V443.5h-1V442.8h-1V443.9h-1V442.8h-1V443.2h-1V443.4h-1V442.6h-1V442.7h-1V442.9h-1V442.7h-1V443.2h-1V442.1h-1V443.1h-1V442.7h-1V441.9h-1V442.0h-1V442.5h-1V442.8h-1V441.7h-1V441.6h-1V442.0h-1V442.5h-1V441.6h-1V441.9h-1V441.9h-1V441.3h-1V442.0h-1V442.0h-1V441.4h-1V441.5h-1V441.9h-1V441.0h-1V440.9h-1V440.9h-1V441.4h-1V441.5h-1V441.2h-1V440.4h-1V440.8h-1V440.5h-1V440.5h-1V440.3h-1V440.7h-1V440.7h-1V440.3h-1V440.5h-1V440.4h-1V439.9h-1V440.1h-1V439.7h-1V440.1h-1V440.2h-1V440.3h-1V439.9h-1V439.8h-1V439.4h-1V439.8h-1V439.7h-1V439.8h-1V439.1h-1V439.1h-1V439.2h-1V439.5h-1V439.1h-1V439.1h-1V439.0h-1V439.0h-1V439.0h-1V439.2h-1V439.3h-1V439.1h-1V438.9h-1V438.7h-1V438.6h-1V438.8h-1V438.7h-1V438.6h-1V438.8h-1V438.9h-1V439.0h-1V438.6h-1V438.5h-1V438.7h-1V438.6h-1V438.9h-1V438.7h-1V438.8h-1V438.6h-1V438.6h-1V438.6h-1V438.5h-1V438.6h-1V438.8h-1V438.8h-1V439.0h-1V438.3h-1V438.3h-1V437.8h-1V437.6h-1Z" fill="#6464dc" shape-rendering="crispEdges"/></svg>
<div class="a" style="left:866px;top:223px;width:2px;height:270px;background:#8a8a8a;"></div>
<div class="a" style="left:0px;top:524px;width:876px;height:17px;background:#f0f0f0;"></div>
<div class="a" style="left:1px;top:524px;width:857px;height:1px;background:#fafafa;"></div>
<div class="a" style="left:153px;top:532px;width:560px;height:2px;background:#8a8a8a;"></div>
<div class="a" style="left:0px;top:207px;width:1px;height:317px;background:#b8b8b8;"></div>
<div class="a" style="left:874.5px;top:163px;width:1.5px;height:380px;background:#b4b4b4;"></div>
<div class="a" style="left:0px;top:540.6px;width:876px;height:1.4px;background:#c4c4c8;"></div>
<div class="a" style="left:2px;top:542px;width:873px;height:55px;background:#f6f7fd;"></div>
<div class="a" style="left:0px;top:596.6px;width:876px;height:1.2px;background:#c8c8cc;"></div>
<div class="a" style="left:0px;top:597.8px;width:876px;height:25px;background:#f0f0f0;"></div>
<div class="a" style="left:1px;top:542px;width:1.2px;height:55px;background:#b4b4b8;"></div>
<div class="a" style="left:4.5px;top:546px;width:5px;height:47px;background:repeating-linear-gradient(to bottom,#c6c6cc 0 1px,rgba(0,0,0,0) 1px 4px)"></div>
<div class="a" style="left:11.3px;top:543px;width:1px;height:53px;background:#dcdce4;"></div>
<div class="t" style="left:18.10px;top:550.00px;font-size:12.00px;letter-spacing:-0.001px;">Project Rate (Hz)</div>
<div class="a" style="left:116px;top:547.3px;width:1px;height:15px;background:#8c8c90;"></div>
<div class="a" style="left:197.3px;top:547.3px;width:1px;height:15px;background:#8c8c90;"></div>
<div class="a" style="left:116px;top:575px;width:1px;height:15px;background:#8c8c90;"></div>
<div class="a" style="left:197.3px;top:575px;width:1px;height:15px;background:#8c8c90;"></div>
<div class="t" style="left:123.20px;top:550.00px;font-size:12.00px;letter-spacing:0.244px;">Snap-To</div>
<div class="a" style="left:203.8px;top:543.5px;width:318px;height:20.6px;background:#fbfbfe;border:1px solid #dadae2;border-radius:2px"></div>
<div class="t" style="left:208.30px;top:548.00px;font-size:12.00px;letter-spacing:-0.201px;">Start and End of Selection</div>
<svg style="left:508.8px;top:551.6px" width="8" height="5" viewBox="0 0 8 5"><path d="M0.300 0.300L4 4L7.700 0.300" fill="none" stroke="#444" stroke-width="1"/></svg>
<div class="a" style="left:18.1px;top:570.4px;width:91.8px;height:22.2px;background:#fff;border:1px solid #4a4a4a;border-radius:2.500px"></div>
<div class="t" style="left:24.00px;top:575.50px;font-size:11.00px;letter-spacing:-0.117px;">48000</div>
<svg style="left:96.5px;top:579.3px" width="8" height="5" viewBox="0 0 8 5"><path d="M0.300 0.300L4 4L7.700 0.300" fill="none" stroke="#444" stroke-width="1"/></svg>
<div class="a" style="left:123.1px;top:570.4px;width:67.4px;height:22.2px;background:#fbfbfe;border:1px solid #d6d6de;border-radius:2px"></div>
<div class="t" style="left:127.60px;top:576.00px;font-size:12.00px;letter-spacing:0.139px;">Off</div>
<svg style="left:177.7px;top:579.3px" width="8" height="5" viewBox="0 0 8 5"><path d="M0.300 0.300L4 4L7.700 0.300" fill="none" stroke="#444" stroke-width="1"/></svg>
<div class="a" style="left:204.3px;top:570.4px;width:154.7px;height:21px;background:#a9acc0;border-top:1.500px solid #6c6c74;border-left:1.500px solid #6c6c74;border-bottom:1px solid #e8e8f0;border-right:1px solid #e8e8f0"></div>
<div class="a" style="left:206px;top:572px;width:23px;height:18.5px;background:#c8cad8;"></div>
<div class="a" style="left:242px;top:572px;width:22.6px;height:18.5px;background:#c8cad8;"></div>
<div class="a" style="left:280.5px;top:572px;width:59px;height:18.5px;background:#c8cad8;"></div>
<div class="t" style="left:209.20px;top:576.00px;font-size:12.00px;color:#1c1cb0;">0</div>
<div class="t" style="left:220.20px;top:576.00px;font-size:12.00px;color:#1c1cb0;">0</div>
<div class="t" style="left:231.80px;top:576.00px;font-size:12.00px;color:#1c1cb0;">h</div>
<div class="t" style="left:244.40px;top:576.00px;font-size:12.00px;color:#1c1cb0;">0</div>
<div class="t" style="left:255.60px;top:576.00px;font-size:12.00px;color:#1c1cb0;">0</div>
<div class="t" style="left:266.20px;top:576.00px;font-size:12.00px;color:#1c1cb0;">m</div>
<div class="t" style="left:283.30px;top:576.00px;font-size:12.00px;color:#1c1cb0;">0</div>
<div class="t" style="left:294.60px;top:576.00px;font-size:12.00px;color:#1c1cb0;">0</div>
<div class="t" style="left:303.00px;top:576.00px;font-size:12.00px;color:#1c1cb0;">.</div>
<div class="t" style="left:308.20px;top:576.00px;font-size:12.00px;color:#1c1cb0;">0</div>
<div class="t" style="left:319.50px;top:576.00px;font-size:12.00px;color:#1c1cb0;">0</div>
<div class="t" style="left:330.50px;top:576.00px;font-size:12.00px;color:#1c1cb0;">0</div>
<div class="t" style="left:342.90px;top:576.00px;font-size:12.00px;color:#1c1cb0;">s</div>
<div class="a" style="left:350.6px;top:572px;width:1px;height:18.5px;background:#dcdce8;"></div>
<svg style="left:352px;top:579px" width="6" height="4" viewBox="0 0 6 4"><path d="M0 0H6L3 3.500Z" fill="#000"/></svg>
<div class="a" style="left:366.6px;top:570.4px;width:154.7px;height:21px;background:#a9acc0;border-top:1.500px solid #6c6c74;border-left:1.500px solid #6c6c74;border-bottom:1px solid #e8e8f0;border-right:1px solid #e8e8f0"></div>
<div class="a" style="left:368.3px;top:572px;width:23px;height:18.5px;background:#c8cad8;"></div>
<div class="a" style="left:404.3px;top:572px;width:22.6px;height:18.5px;background:#c8cad8;"></div>
<div class="a" style="left:442.8px;top:572px;width:59px;height:18.5px;background:#c8cad8;"></div>
<div class="t" style="left:371.50px;top:576.00px;font-size:12.00px;color:#1c1cb0;">0</div>
<div class="t" style="left:382.50px;top:576.00px;font-size:12.00px;color:#1c1cb0;">0</div>
<div class="t" style="left:394.10px;top:576.00px;font-size:12.00px;color:#1c1cb0;">h</div>
<div class="t" style="left:406.70px;top:576.00px;font-size:12.00px;color:#1c1cb0;">0</div>
<div class="t" style="left:417.90px;top:576.00px;font-size:12.00px;color:#1c1cb0;">0</div>
<div class="t" style="left:428.50px;top:576.00px;font-size:12.00px;color:#1c1cb0;">m</div>
<div class="t" style="left:445.60px;top:576.00px;font-size:12.00px;color:#1c1cb0;">0</div>
<div class="t" style="left:456.90px;top:576.00px;font-size:12.00px;color:#1c1cb0;">0</div>
<div class="t" style="left:465.30px;top:576.00px;font-size:12.00px;color:#1c1cb0;">.</div>
<div class="t" style="left:470.50px;top:576.00px;font-size:12.00px;color:#1c1cb0;">0</div>
<div class="t" style="left:481.80px;top:576.00px;font-size:12.00px;color:#1c1cb0;">0</div>
<div class="t" style="left:492.80px;top:576.00px;font-size:12.00px;color:#1c1cb0;">0</div>
<div class="t" style="left:505.20px;top:576.00px;font-size:12.00px;color:#1c1cb0;">s</div>
<div class="a" style="left:512.9px;top:572px;width:1px;height:18.5px;background:#dcdce8;"></div>
<svg style="left:514.3px;top:579px" width="6" height="4" viewBox="0 0 6 4"><path d="M0 0H6L3 3.500Z" fill="#000"/></svg>
<div class="a" style="left:528px;top:543px;width:1px;height:53px;background:#cdcdd0;"></div>
<div class="a" style="left:538.4px;top:543px;width:1px;height:53px;background:#dcdce4;"></div>
<div class="a" style="left:531px;top:547px;width:5px;height:47px;background:repeating-linear-gradient(to bottom,#c6c6cc 0 1px,rgba(0,0,0,0) 1px 4px)"></div>
<div class="a" style="left:540.6px;top:549.4px;width:224px;height:37.8px;background:#a9acc0;border-top:1.500px solid #6c6c74;border-left:1.500px solid #6c6c74;border-bottom:1px solid #e8e8f0;border-right:1px solid #e8e8f0"></div>
<div class="a" style="left:542.2px;top:551px;width:40.8px;height:35.2px;background:#c8cad8;"></div>
<div class="a" style="left:613.5px;top:551px;width:40.9px;height:35.2px;background:#c8cad8;"></div>
<div class="a" style="left:691.8px;top:551px;width:40.9px;height:35.2px;background:#c8cad8;"></div>
<div class="a" style="left:754.6px;top:551px;width:1px;height:35.2px;background:#e4e4ee;"></div>
<div class="t" style="left:545.20px;top:556.50px;font-size:27.00px;color:#1c1cb0;">0</div>
<div class="t" style="left:565.10px;top:556.50px;font-size:27.00px;color:#1c1cb0;">0</div>
<div class="t" style="left:591.10px;top:556.50px;font-size:27.00px;color:#1c1cb0;">h</div>
<div class="t" style="left:616.20px;top:556.50px;font-size:27.00px;color:#1c1cb0;">0</div>
<div class="t" style="left:636.30px;top:556.50px;font-size:27.00px;color:#1c1cb0;">0</div>
<div class="t" style="left:661.50px;top:556.50px;font-size:27.00px;color:#1c1cb0;">m</div>
<div class="t" style="left:693.90px;top:556.50px;font-size:27.00px;color:#1c1cb0;">0</div>
<div class="t" style="left:713.90px;top:556.50px;font-size:27.00px;color:#1c1cb0;">0</div>
<div class="t" style="left:739.50px;top:556.50px;font-size:27.00px;color:#1c1cb0;">s</div>
<svg style="left:756.8px;top:567px" width="6" height="4" viewBox="0 0 6 4"><path d="M0 0H6L3 3.400Z" fill="#000"/></svg>
<div class="a" style="left:767.6px;top:543px;width:1px;height:53px;background:#cdcdd0;"></div>
<div class="a" style="left:770.8px;top:543px;width:1px;height:53px;background:#dcdce4;"></div>
<div class="t" style="left:15.60px;top:605.00px;font-size:12.00px;letter-spacing:-0.255px;">Stopped.</div>
<div class="a" style="left:10.5px;top:599.5px;width:1px;height:20px;background:#d9d9d9;"></div>
<div class="a" style="left:181.4px;top:599.5px;width:1px;height:20px;background:#d9d9d9;"></div>
<div class="a" style="left:696.5px;top:599.5px;width:1px;height:20px;background:#d9d9d9;"></div>
<svg style="left:865px;top:611px" width="9" height="9" viewBox="0 0 9 9"><g fill="#b4b4b4"><rect x="6" y="0" width="1.900" height="1.900"/><rect x="3" y="3" width="1.900" height="1.900"/><rect x="6" y="3" width="1.900" height="1.900"/><rect x="0" y="6" width="1.900" height="1.900"/><rect x="3" y="6" width="1.900" height="1.900"/><rect x="6" y="6" width="1.900" height="1.900"/></g></svg>
<div class="a" style="left:0;top:0;width:876px;height:622px;border:1px solid #b9b9b9;border-radius:8px;box-shadow:0 0 0 12px #ebebeb;pointer-events:none"></div>
</body></html>
